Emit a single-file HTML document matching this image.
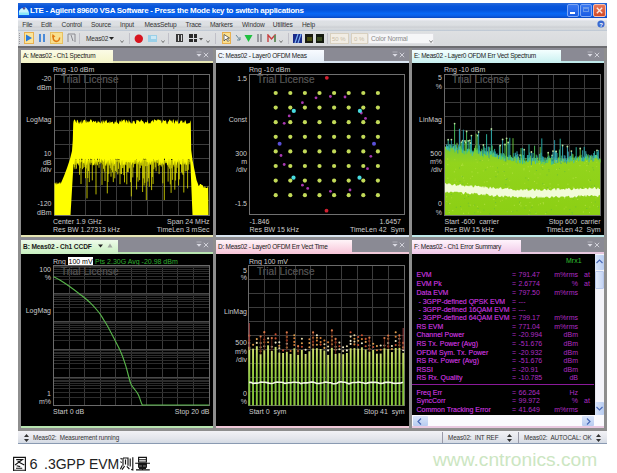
<!DOCTYPE html><html><head><meta charset="utf-8"><style>
html,body{margin:0;padding:0;background:#fff;}
body{width:617px;height:473px;position:relative;overflow:hidden;font-family:"Liberation Sans",sans-serif;}
div{box-sizing:border-box;}
</style></head><body>
<div style="position:absolute;left:18px;top:3px;width:589px;height:441px;background:#8e8e8e;"></div>
<div style="position:absolute;left:18px;top:3px;width:589px;height:15px;background:linear-gradient(#2a6ad8 0%,#0856dc 20%,#0452da 45%,#0866f4 70%,#0a5ee8 85%,#0846c0 100%);"></div>
<svg style="position:absolute;left:19px;top:6px" width="10" height="9" viewBox="0 0 10 9"><path d="M0 9 L0 5 C1 3 2.5 1.5 4.5 2 C5.5 1 7.5 1.5 8.5 3.5 C9.5 4.5 10 6 10 9Z" fill="#c8f4fc"/><path d="M3.5 2.2 L5 0.8 L6.5 2.2 L5 4Z" fill="#5a4a8a"/><rect x="0" y="6.5" width="10" height="2.5" fill="#8ae8f8"/></svg>
<div style="position:absolute;left:30px;top:7px;font-size:8px;line-height:8px;color:#fff;white-space:nowrap;font-weight:bold;letter-spacing:-0.28px;">LTE - Agilent 89600 VSA Software - Press the Mode key to switch applications</div>
<div style="position:absolute;left:567px;top:4px;width:12px;height:12.5px;background:linear-gradient(#3a78f0,#1a5ce4);border:1px solid #7ea6f4;border-radius:2px;"></div>
<div style="position:absolute;left:570px;top:12px;width:5px;height:2px;background:#fff;"></div>
<div style="position:absolute;left:580px;top:4px;width:12px;height:12.5px;background:linear-gradient(#3a78f0,#1a5ce4);border:1px solid #7ea6f4;border-radius:2px;"></div>
<div style="position:absolute;left:583px;top:7px;width:6px;height:5px;border:1px solid #6a98e8;border-top-width:2px;"></div>
<div style="position:absolute;left:593px;top:4px;width:13px;height:12.5px;background:linear-gradient(#e8785a,#d04a28);border:1px solid #f4c0b0;border-radius:2px;"></div>
<svg style="position:absolute;left:593px;top:4px" width="13" height="13"><path d="M3.8 3.8 L9.2 9.2 M9.2 3.8 L3.8 9.2" stroke="#fbe8e0" stroke-width="1.4"/></svg>
<div style="position:absolute;left:18px;top:18px;width:589px;height:12.5px;background:linear-gradient(#eeeef6 0%,#eeeef6 12%,#dde0e4 25%,#dcdfe2 55%,#cdd0d4 70%,#d8dbde 85%,#b8c4d2 100%);"></div>
<div style="position:absolute;left:22.3px;top:21.8px;font-size:6.6px;line-height:6.6px;color:#333;white-space:nowrap;letter-spacing:-0.15px;">File</div>
<div style="position:absolute;left:41px;top:21.8px;font-size:6.6px;line-height:6.6px;color:#333;white-space:nowrap;letter-spacing:-0.15px;">Edit</div>
<div style="position:absolute;left:61.6px;top:21.8px;font-size:6.6px;line-height:6.6px;color:#333;white-space:nowrap;letter-spacing:-0.15px;">Control</div>
<div style="position:absolute;left:91px;top:21.8px;font-size:6.6px;line-height:6.6px;color:#333;white-space:nowrap;letter-spacing:-0.15px;">Source</div>
<div style="position:absolute;left:120px;top:21.8px;font-size:6.6px;line-height:6.6px;color:#333;white-space:nowrap;letter-spacing:-0.15px;">Input</div>
<div style="position:absolute;left:144.5px;top:21.8px;font-size:6.6px;line-height:6.6px;color:#333;white-space:nowrap;letter-spacing:-0.15px;">MeasSetup</div>
<div style="position:absolute;left:185.5px;top:21.8px;font-size:6.6px;line-height:6.6px;color:#333;white-space:nowrap;letter-spacing:-0.15px;">Trace</div>
<div style="position:absolute;left:210px;top:21.8px;font-size:6.6px;line-height:6.6px;color:#333;white-space:nowrap;letter-spacing:-0.15px;">Markers</div>
<div style="position:absolute;left:242px;top:21.8px;font-size:6.6px;line-height:6.6px;color:#333;white-space:nowrap;letter-spacing:-0.15px;">Window</div>
<div style="position:absolute;left:272.8px;top:21.8px;font-size:6.6px;line-height:6.6px;color:#333;white-space:nowrap;letter-spacing:-0.15px;">Utilities</div>
<div style="position:absolute;left:302px;top:21.8px;font-size:6.6px;line-height:6.6px;color:#333;white-space:nowrap;letter-spacing:-0.15px;">Help</div>
<svg style="position:absolute;left:597px;top:20px" width="8" height="8"><circle cx="4" cy="4" r="3.6" fill="#3a6ad0"/><text x="4" y="6.5" font-size="6" font-weight="bold" text-anchor="middle" fill="#fff" font-family="Liberation Sans">?</text></svg>
<div style="position:absolute;left:18px;top:30.5px;width:589px;height:15.5px;background:linear-gradient(#dee0e2,#d8dadd);"></div>
<div style="position:absolute;left:18px;top:45.8px;width:589px;height:2.5px;background:#6c6c70;"></div>
<div style="position:absolute;left:19px;top:33px;width:1px;height:1px;background:#9a9aa0;"></div>
<div style="position:absolute;left:19px;top:35px;width:1px;height:1px;background:#9a9aa0;"></div>
<div style="position:absolute;left:19px;top:37px;width:1px;height:1px;background:#9a9aa0;"></div>
<div style="position:absolute;left:19px;top:39px;width:1px;height:1px;background:#9a9aa0;"></div>
<div style="position:absolute;left:19px;top:41px;width:1px;height:1px;background:#9a9aa0;"></div>
<div style="position:absolute;left:19px;top:43px;width:1px;height:1px;background:#9a9aa0;"></div>
<div style="position:absolute;left:23.5px;top:32px;width:10px;height:12px;background:#fbe49a;border:1px solid #e8b050;"></div>
<svg style="position:absolute;left:25px;top:34px" width="8" height="8"><path d="M1 0.5 L7 4 L1 7.5Z" fill="#2a7ad8"/></svg>
<div style="position:absolute;left:39px;top:34px;width:2px;height:8px;background:#4a8ad8;"></div>
<div style="position:absolute;left:43px;top:34px;width:2px;height:8px;background:#4a8ad8;"></div>
<div style="position:absolute;left:50px;top:32px;width:12.5px;height:12px;background:#f8e090;border:1px solid #e8c060;"></div>
<svg style="position:absolute;left:51px;top:33px" width="11" height="10"><path d="M3 3 A3.2 3.2 0 1 0 8.5 4.5" stroke="#e07a10" stroke-width="1.5" fill="none"/><path d="M1.5 1 L4.5 3.5 L1 4.5Z" fill="#e07a10"/></svg>
<svg style="position:absolute;left:67px;top:33px" width="9" height="10"><path d="M1 1 L8 1 M1 1 L1 9 M8 1 L8 9 M4 2 L6 8" stroke="#8a8a90" stroke-width="1" fill="none"/></svg>
<div style="position:absolute;left:79px;top:33px;width:1px;height:11px;background:#c0c0c8;"></div>
<div style="position:absolute;left:86px;top:36px;font-size:6.6px;line-height:6.6px;color:#333;white-space:nowrap;letter-spacing:-0.2px;">Meas02</div>
<svg style="position:absolute;left:109px;top:37px" width="5" height="4"><path d="M0 0 L5 0 L2.5 3Z" fill="#222"/></svg>
<svg style="position:absolute;left:119.7px;top:39px" width="4" height="5"><path d="M0.5 1.5 L2 3.5 L3.5 1.5" stroke="#555" stroke-width="0.8" fill="none"/></svg>
<div style="position:absolute;left:129px;top:33px;width:1px;height:11px;background:#c0c0c8;"></div>
<svg style="position:absolute;left:134px;top:34px" width="10" height="10"><circle cx="4.8" cy="4.8" r="4.2" fill="#d8141e"/></svg>
<div style="position:absolute;left:148px;top:35px;width:9px;height:7px;background:#9ad0e8;"></div>
<div style="position:absolute;left:151px;top:36px;width:5px;height:3px;background:#cce8f4;"></div>
<svg style="position:absolute;left:160.5px;top:39px" width="4" height="5"><path d="M0.5 1.5 L2 3.5 L3.5 1.5" stroke="#555" stroke-width="0.8" fill="none"/></svg>
<div style="position:absolute;left:168px;top:33px;width:1px;height:11px;background:#c0c0c8;"></div>
<div style="position:absolute;left:176px;top:34px;width:7px;height:8px;background:#3a3a3a;"></div>
<div style="position:absolute;left:178px;top:35px;width:1px;height:6px;background:#ddd;"></div>
<div style="position:absolute;left:180.5px;top:35px;width:1px;height:6px;background:#ddd;"></div>
<div style="position:absolute;left:189px;top:34px;width:3.5px;height:3.5px;background:#2a2a2a;"></div>
<div style="position:absolute;left:193.5px;top:34px;width:3.5px;height:3.5px;background:#2a2a2a;"></div>
<div style="position:absolute;left:189px;top:38.5px;width:3.5px;height:3.5px;background:#2a2a2a;"></div>
<div style="position:absolute;left:193.5px;top:38.5px;width:3.5px;height:3.5px;background:#2a2a2a;"></div>
<svg style="position:absolute;left:199px;top:38px" width="4" height="3"><path d="M0 0 L4 0 L2 2.5Z" fill="#555"/></svg>
<svg style="position:absolute;left:206px;top:39px" width="4" height="5"><path d="M0.5 1.5 L2 3.5 L3.5 1.5" stroke="#555" stroke-width="0.8" fill="none"/></svg>
<div style="position:absolute;left:215px;top:33px;width:1px;height:11px;background:#c0c0c8;"></div>
<div style="position:absolute;left:221.5px;top:32px;width:9px;height:12px;background:#fbe090;border:1px solid #e8b050;"></div>
<svg style="position:absolute;left:223px;top:34px" width="7" height="8"><path d="M1 0.5 L1 7 L3 5 L5 7.5 L6 6.5 L4 4.5 L6.5 4 Z" fill="#fff" stroke="#333" stroke-width="0.7"/></svg>
<svg style="position:absolute;left:235px;top:34px" width="7" height="9"><path d="M1 1 L5 6 M5 3 L5 6 L2 6" stroke="#6a8a9a" stroke-width="1" fill="none"/></svg>
<svg style="position:absolute;left:244px;top:34px" width="9" height="9"><path d="M0.5 1 L8.5 1 L4.5 8Z" fill="#20c040"/></svg>
<div style="position:absolute;left:257px;top:34px;width:1.5px;height:8px;background:#9a9aa0;"></div>
<div style="position:absolute;left:260px;top:34px;width:1.5px;height:8px;background:#9a9aa0;"></div>
<svg style="position:absolute;left:267px;top:34px" width="10" height="9"><path d="M1 8 L1 1 L4.5 5 L8 1 L8 8" stroke="#c84040" stroke-width="1.4" fill="none"/><path d="M8 1 L8 8" stroke="#40a060" stroke-width="1.4"/></svg>
<svg style="position:absolute;left:279px;top:39px" width="4" height="5"><path d="M0.5 1.5 L2 3.5 L3.5 1.5" stroke="#555" stroke-width="0.8" fill="none"/></svg>
<div style="position:absolute;left:288px;top:33px;width:1px;height:11px;background:#c0c0c8;"></div>
<svg style="position:absolute;left:293px;top:34px" width="9" height="9"><rect width="9" height="9" fill="#1a2a8a"/><path d="M2 9 L5 0 M5 9 L8 0" stroke="#7ab0f0" stroke-width="1.2"/></svg>
<div style="position:absolute;left:305px;top:34px;width:8px;height:9px;background:#1a1a10;"></div>
<div style="position:absolute;left:306.5px;top:37px;width:5px;height:4px;background:#4a5010;"></div>
<div style="position:absolute;left:315.5px;top:34px;width:8px;height:9px;background:#141a10;"></div>
<div style="position:absolute;left:317px;top:37px;width:5px;height:4px;background:#3a4a20;"></div>
<div style="position:absolute;left:327px;top:33px;width:1px;height:11px;background:#c0c0c8;"></div>
<div style="position:absolute;left:330px;top:32.5px;width:18.5px;height:11.5px;background:#f2ede4;border:1px solid #d8d0c0;"></div>
<div style="position:absolute;left:332px;top:36px;font-size:6px;line-height:6px;color:#c8bca8;white-space:nowrap;">50 %</div>
<div style="position:absolute;left:351px;top:32.5px;width:17px;height:11.5px;background:#f2ede4;border:1px solid #d8d0c0;"></div>
<div style="position:absolute;left:354px;top:36px;font-size:6px;line-height:6px;color:#c8bca8;white-space:nowrap;">0 %</div>
<div style="position:absolute;left:368px;top:33px;width:66px;height:11px;background:#f6f6f8;border:1px solid #e0e0e4;"></div>
<div style="position:absolute;left:371px;top:36px;font-size:6.6px;line-height:6.6px;color:#8a8a8a;white-space:nowrap;letter-spacing:-0.2px;">Color Normal</div>
<svg style="position:absolute;left:429px;top:39px" width="4" height="5"><path d="M0.5 1.5 L2 3.5 L3.5 1.5" stroke="#555" stroke-width="0.8" fill="none"/></svg>
<div style="position:absolute;left:21px;top:48px;width:192px;height:13px;background:#8a8a94;"></div>
<div style="position:absolute;left:21px;top:61px;width:192px;height:2px;background:#e6e6b4;"></div>
<div style="position:absolute;left:21px;top:49.5px;width:92px;height:13.5px;background:linear-gradient(#fbfbe6,#f4f4c8);"></div>
<div style="position:absolute;left:21px;top:63px;width:192px;height:172px;background:#000;"></div>
<div style="position:absolute;left:21px;top:235px;width:192px;height:2px;background:#e6e6b4;"></div>
<div style="position:absolute;left:23px;top:52.87px;font-size:6.5px;line-height:6.5px;color:#1a1a1a;white-space:nowrap;letter-spacing:-0.25px;">A: Meas02 - Ch1 Spectrum</div>
<svg style="position:absolute;left:196px;top:51px" width="6" height="7"><path d="M0.5 1 L5.5 1" stroke="#b8b8c0" stroke-width="0.8"/><path d="M0.5 3 L5.5 3 L3 5.8Z" fill="#dcdce4"/></svg>
<svg style="position:absolute;left:203px;top:51.5px" width="6" height="6"><path d="M0.8 0.8 L5.2 5.2 M5.2 0.8 L0.8 5.2" stroke="#d0d0d8" stroke-width="1"/></svg>
<div style="position:absolute;left:216px;top:48px;width:193px;height:13px;background:#8a8a94;"></div>
<div style="position:absolute;left:216px;top:61px;width:193px;height:2px;background:#d8e4f0;"></div>
<div style="position:absolute;left:216px;top:49.5px;width:108px;height:13.5px;background:linear-gradient(#f8fbff,#e2ecf6);"></div>
<div style="position:absolute;left:216px;top:63px;width:193px;height:172px;background:#000;"></div>
<div style="position:absolute;left:216px;top:235px;width:193px;height:2px;background:#d8e4f0;"></div>
<div style="position:absolute;left:218px;top:52.87px;font-size:6.5px;line-height:6.5px;color:#1a1a1a;white-space:nowrap;letter-spacing:-0.25px;">C: Meas02 - Layer0 OFDM Meas</div>
<svg style="position:absolute;left:392px;top:51px" width="6" height="7"><path d="M0.5 1 L5.5 1" stroke="#b8b8c0" stroke-width="0.8"/><path d="M0.5 3 L5.5 3 L3 5.8Z" fill="#dcdce4"/></svg>
<svg style="position:absolute;left:399px;top:51.5px" width="6" height="6"><path d="M0.8 0.8 L5.2 5.2 M5.2 0.8 L0.8 5.2" stroke="#d0d0d8" stroke-width="1"/></svg>
<div style="position:absolute;left:412px;top:48px;width:192px;height:13px;background:#8a8a94;"></div>
<div style="position:absolute;left:412px;top:61px;width:192px;height:2px;background:#bfe8ea;"></div>
<div style="position:absolute;left:412px;top:49.5px;width:149px;height:13.5px;background:linear-gradient(#f4ffff,#c8f0f0);"></div>
<div style="position:absolute;left:412px;top:63px;width:192px;height:172px;background:#000;"></div>
<div style="position:absolute;left:412px;top:235px;width:192px;height:2px;background:#bfe8ea;"></div>
<div style="position:absolute;left:414px;top:52.87px;font-size:6.5px;line-height:6.5px;color:#1a1a1a;white-space:nowrap;letter-spacing:-0.25px;">E: Meas02 - Layer0 OFDM Err Vect Spectrum</div>
<svg style="position:absolute;left:587px;top:51px" width="6" height="7"><path d="M0.5 1 L5.5 1" stroke="#b8b8c0" stroke-width="0.8"/><path d="M0.5 3 L5.5 3 L3 5.8Z" fill="#dcdce4"/></svg>
<svg style="position:absolute;left:594px;top:51.5px" width="6" height="6"><path d="M0.8 0.8 L5.2 5.2 M5.2 0.8 L0.8 5.2" stroke="#d0d0d8" stroke-width="1"/></svg>
<div style="position:absolute;left:21px;top:238px;width:192px;height:13.5px;background:#8a8a94;"></div>
<div style="position:absolute;left:21px;top:251.5px;width:192px;height:2.5px;background:#b8e4b0;"></div>
<div style="position:absolute;left:21px;top:240.2px;width:97px;height:13.800000000000011px;background:linear-gradient(#eefbea,#c8f0c0);"></div>
<div style="position:absolute;left:21px;top:254px;width:192px;height:172px;background:#000;"></div>
<div style="position:absolute;left:21px;top:426px;width:192px;height:2px;background:#b8e4b0;"></div>
<div style="position:absolute;left:23px;top:244.02px;font-size:6.6px;line-height:6.6px;color:#1a1a1a;white-space:nowrap;font-weight:bold;letter-spacing:-0.12px;">B: Meas02 - Ch1 CCDF</div>
<svg style="position:absolute;left:98px;top:244px" width="5" height="4"><path d="M0 0.5 L5 0.5 L2.5 3.5Z" fill="#222"/></svg>
<svg style="position:absolute;left:107px;top:243px" width="6" height="5"><path d="M0.5 4.5 L3 0.5 L5.5 4.5Z" fill="#a0a8a0"/></svg>
<svg style="position:absolute;left:196px;top:241px" width="6" height="7"><path d="M0.5 1 L5.5 1" stroke="#b8b8c0" stroke-width="0.8"/><path d="M0.5 3 L5.5 3 L3 5.8Z" fill="#dcdce4"/></svg>
<svg style="position:absolute;left:203px;top:241.5px" width="6" height="6"><path d="M0.8 0.8 L5.2 5.2 M5.2 0.8 L0.8 5.2" stroke="#d0d0d8" stroke-width="1"/></svg>
<div style="position:absolute;left:216px;top:238px;width:193px;height:13.5px;background:#8a8a94;"></div>
<div style="position:absolute;left:216px;top:251.5px;width:193px;height:2.5px;background:#f0c8d8;"></div>
<div style="position:absolute;left:216px;top:240.2px;width:136px;height:13.800000000000011px;background:linear-gradient(#fff4f8,#f8c4d8);"></div>
<div style="position:absolute;left:216px;top:254px;width:193px;height:172px;background:#000;"></div>
<div style="position:absolute;left:216px;top:426px;width:193px;height:2px;background:#f0c8d8;"></div>
<div style="position:absolute;left:218px;top:243.57px;font-size:6.5px;line-height:6.5px;color:#1a1a1a;white-space:nowrap;letter-spacing:-0.25px;">D: Meas02 - Layer0 OFDM Err Vect Time</div>
<svg style="position:absolute;left:392px;top:241px" width="6" height="7"><path d="M0.5 1 L5.5 1" stroke="#b8b8c0" stroke-width="0.8"/><path d="M0.5 3 L5.5 3 L3 5.8Z" fill="#dcdce4"/></svg>
<svg style="position:absolute;left:399px;top:241.5px" width="6" height="6"><path d="M0.8 0.8 L5.2 5.2 M5.2 0.8 L0.8 5.2" stroke="#d0d0d8" stroke-width="1"/></svg>
<div style="position:absolute;left:412px;top:238px;width:192px;height:13.5px;background:#8a8a94;"></div>
<div style="position:absolute;left:412px;top:251.5px;width:192px;height:2.5px;background:#e8c8e0;"></div>
<div style="position:absolute;left:412px;top:240.2px;width:109px;height:13.800000000000011px;background:linear-gradient(#fff4fc,#f0c8e8);"></div>
<div style="position:absolute;left:412px;top:254px;width:192px;height:172px;background:#000;"></div>
<div style="position:absolute;left:412px;top:426px;width:192px;height:2px;background:#e8c8e0;"></div>
<div style="position:absolute;left:414px;top:243.57px;font-size:6.5px;line-height:6.5px;color:#1a1a1a;white-space:nowrap;letter-spacing:-0.25px;">F: Meas02 - Ch1 Error Summary</div>
<svg style="position:absolute;left:587px;top:241px" width="6" height="7"><path d="M0.5 1 L5.5 1" stroke="#b8b8c0" stroke-width="0.8"/><path d="M0.5 3 L5.5 3 L3 5.8Z" fill="#dcdce4"/></svg>
<svg style="position:absolute;left:594px;top:241.5px" width="6" height="6"><path d="M0.8 0.8 L5.2 5.2 M5.2 0.8 L0.8 5.2" stroke="#d0d0d8" stroke-width="1"/></svg>
<div style="position:absolute;left:18px;top:431px;width:589px;height:13px;background:linear-gradient(#f2f2f6,#e4e6ec 60%,#d4dae4);border-bottom:1px solid #8a9ab2;"></div>
<svg style="position:absolute;left:24px;top:434px" width="5" height="8"><path d="M0 3 L2.5 0 L5 3Z M0 5 L2.5 8 L5 5Z" fill="#333"/></svg>
<div style="position:absolute;left:33px;top:434.96px;font-size:6.3px;line-height:6.3px;color:#333;white-space:nowrap;letter-spacing:-0.1px;">Meas02:&nbsp; Measurement running</div>
<div style="position:absolute;left:442px;top:432px;width:1px;height:11px;background:#9a9aa8;"></div>
<div style="position:absolute;left:448px;top:434.96px;font-size:6.3px;line-height:6.3px;color:#333;white-space:nowrap;letter-spacing:-0.1px;">Meas02:&nbsp; INT REF</div>
<svg style="position:absolute;left:506.5px;top:434px" width="5" height="8"><path d="M0 3 L2.5 0 L5 3Z M0 5 L2.5 8 L5 5Z" fill="#333"/></svg>
<div style="position:absolute;left:518px;top:432px;width:1px;height:11px;background:#9a9aa8;"></div>
<div style="position:absolute;left:524px;top:434.96px;font-size:6.3px;line-height:6.3px;color:#333;white-space:nowrap;letter-spacing:-0.1px;">Meas02:&nbsp; AUTOCAL: OK</div>
<svg style="position:absolute;left:595.5px;top:434px" width="5" height="8"><path d="M0 3 L2.5 0 L5 3Z M0 5 L2.5 8 L5 5Z" fill="#333"/></svg>
<div style="position:absolute;left:433px;top:449.75px;font-size:19.2px;line-height:19.2px;color:#cce6c2;white-space:nowrap;">www.cntronics.com</div>
<div style="position:absolute;left:53px;top:66.13px;font-size:7px;line-height:7px;color:#cccccc;white-space:nowrap;">Rng -10 dBm</div>
<svg style="position:absolute;left:52px;top:72px" width="160" height="146"><line x1="17.5" y1="2.5" x2="17.5" y2="143.5" stroke="#3c3c3c" stroke-width="1"/><line x1="33.5" y1="2.5" x2="33.5" y2="143.5" stroke="#3c3c3c" stroke-width="1"/><line x1="48.5" y1="2.5" x2="48.5" y2="143.5" stroke="#3c3c3c" stroke-width="1"/><line x1="64.5" y1="2.5" x2="64.5" y2="143.5" stroke="#3c3c3c" stroke-width="1"/><line x1="79.5" y1="2.5" x2="79.5" y2="143.5" stroke="#3c3c3c" stroke-width="1"/><line x1="95.5" y1="2.5" x2="95.5" y2="143.5" stroke="#3c3c3c" stroke-width="1"/><line x1="110.5" y1="2.5" x2="110.5" y2="143.5" stroke="#3c3c3c" stroke-width="1"/><line x1="126.5" y1="2.5" x2="126.5" y2="143.5" stroke="#3c3c3c" stroke-width="1"/><line x1="141.5" y1="2.5" x2="141.5" y2="143.5" stroke="#3c3c3c" stroke-width="1"/><line x1="2.5" y1="16.5" x2="157.5" y2="16.5" stroke="#3c3c3c" stroke-width="1"/><line x1="2.5" y1="30.5" x2="157.5" y2="30.5" stroke="#3c3c3c" stroke-width="1"/><line x1="2.5" y1="44.5" x2="157.5" y2="44.5" stroke="#3c3c3c" stroke-width="1"/><line x1="2.5" y1="58.5" x2="157.5" y2="58.5" stroke="#3c3c3c" stroke-width="1"/><line x1="2.5" y1="72.5" x2="157.5" y2="72.5" stroke="#3c3c3c" stroke-width="1"/><line x1="2.5" y1="86.5" x2="157.5" y2="86.5" stroke="#3c3c3c" stroke-width="1"/><line x1="2.5" y1="100.5" x2="157.5" y2="100.5" stroke="#3c3c3c" stroke-width="1"/><line x1="2.5" y1="114.5" x2="157.5" y2="114.5" stroke="#3c3c3c" stroke-width="1"/><line x1="2.5" y1="128.5" x2="157.5" y2="128.5" stroke="#3c3c3c" stroke-width="1"/><rect x="2.5" y="2.5" width="155.0" height="141.0" fill="none" stroke="#6a6a6a" stroke-width="1"/></svg>
<div style="position:absolute;left:61px;top:75.18px;font-size:10px;line-height:10px;color:#4c4c4c;white-space:nowrap;letter-spacing:0.1px;text-shadow:0 0 0.6px #4c4c4c;">Trial License</div>
<div style="position:absolute;right:565.5px;top:74.63px;font-size:7px;line-height:7px;color:#cccccc;white-space:nowrap;">-20</div>
<div style="position:absolute;right:565.5px;top:83.63px;font-size:7px;line-height:7px;color:#cccccc;white-space:nowrap;">dBm</div>
<div style="position:absolute;right:565.5px;top:116.13px;font-size:7px;line-height:7px;color:#cccccc;white-space:nowrap;">LogMag</div>
<div style="position:absolute;right:565.5px;top:149.63px;font-size:7px;line-height:7px;color:#cccccc;white-space:nowrap;">10</div>
<div style="position:absolute;right:565.5px;top:158.63px;font-size:7px;line-height:7px;color:#cccccc;white-space:nowrap;">dB</div>
<div style="position:absolute;right:565.5px;top:166.13px;font-size:7px;line-height:7px;color:#cccccc;white-space:nowrap;">/div</div>
<div style="position:absolute;right:565.5px;top:199.63px;font-size:7px;line-height:7px;color:#cccccc;white-space:nowrap;">-120</div>
<div style="position:absolute;right:565.5px;top:208.63px;font-size:7px;line-height:7px;color:#cccccc;white-space:nowrap;">dBm</div>
<div style="position:absolute;left:53px;top:217.63px;font-size:7px;line-height:7px;color:#cccccc;white-space:nowrap;">Center 1.9 GHz</div>
<div style="position:absolute;left:53px;top:225.63px;font-size:7px;line-height:7px;color:#cccccc;white-space:nowrap;">Res BW 1.27313 kHz</div>
<div style="position:absolute;right:407.5px;top:217.63px;font-size:7px;line-height:7px;color:#cccccc;white-space:nowrap;">Span 24 MHz</div>
<div style="position:absolute;right:407.5px;top:225.63px;font-size:7px;line-height:7px;color:#cccccc;white-space:nowrap;">TimeLen 3 mSec</div>
<svg style="position:absolute;left:0;top:0" width="617" height="473"><polygon fill="#ffff00" points="54.5,215.0 54.5,183.2 55.3,182.5 56.1,184.7 56.9,182.1 57.7,184.2 58.5,183.4 59.3,182.1 60.1,184.0 60.9,182.0 61.0,183.0 64.0,176.0 67.0,168.0 70.0,159.0 72.0,151.0 72.8,140.0 73.2,124.0 73.5,121.4 74.2,119.5 74.9,119.7 75.6,121.3 76.3,123.3 77.0,119.8 77.7,120.3 78.4,122.3 79.1,123.9 79.8,122.1 80.5,121.2 81.2,124.1 81.9,119.4 82.6,123.5 83.3,120.6 84.0,119.9 84.7,119.8 85.4,120.7 86.1,123.3 86.8,120.1 87.5,122.1 88.2,122.4 88.9,121.1 89.6,121.9 90.3,119.5 91.0,119.5 91.7,120.2 92.4,122.6 93.1,121.3 93.8,120.8 94.5,122.1 95.2,121.5 95.9,120.7 96.6,123.2 97.3,122.7 98.0,120.4 98.7,122.1 99.4,121.8 100.1,123.6 100.8,122.8 101.5,120.6 102.2,124.1 102.9,119.8 103.6,121.3 104.3,123.0 105.0,120.0 105.7,121.6 106.4,119.4 107.1,122.5 107.8,123.0 108.5,122.1 109.2,123.6 109.9,120.8 110.6,122.7 111.3,122.2 112.0,122.1 112.7,121.5 113.4,123.4 114.1,123.9 114.8,121.6 115.5,122.5 116.2,119.5 116.9,122.7 117.6,122.4 118.3,124.2 119.0,123.3 119.7,120.6 120.4,121.1 121.1,122.5 121.8,119.3 122.5,121.5 123.2,120.0 123.9,119.8 124.6,119.5 125.3,123.0 126.0,119.8 126.7,120.4 127.4,121.2 128.1,123.6 128.8,119.6 129.5,121.4 130.2,121.9 130.9,123.6 131.6,123.3 132.3,123.5 133.0,120.6 133.7,121.3 134.4,121.0 135.1,123.6 135.8,124.0 136.5,120.0 137.2,120.1 137.9,120.4 138.6,120.4 139.3,121.6 140.0,122.1 140.7,120.5 141.4,119.2 142.1,121.3 142.8,121.0 143.5,122.0 144.2,124.0 144.9,122.7 145.6,121.8 146.3,122.3 147.0,122.6 147.7,119.5 148.4,123.7 149.1,123.1 149.8,123.6 150.5,123.2 151.2,121.2 151.9,121.2 152.6,119.7 153.3,122.4 154.0,119.5 154.7,119.5 155.4,120.2 156.1,120.0 156.8,120.9 157.5,119.5 158.2,119.2 158.9,120.0 159.6,119.7 160.3,121.0 161.0,119.3 161.7,123.6 162.4,122.3 163.1,119.9 163.8,120.5 164.5,120.9 165.2,121.0 165.9,119.8 166.6,123.4 167.3,124.2 168.0,121.5 168.7,121.6 169.4,119.6 170.1,119.7 170.8,120.9 171.5,120.5 172.2,123.3 172.9,120.0 173.6,119.3 174.3,124.0 175.0,121.8 175.7,119.9 176.4,121.9 177.1,119.3 177.8,121.8 178.5,124.1 179.2,123.5 179.9,122.7 180.6,120.5 181.3,121.0 182.0,120.0 182.7,123.1 183.4,121.9 184.1,123.1 184.8,120.8 185.5,120.3 186.2,123.3 186.9,124.1 187.6,123.5 188.3,123.2 189.0,123.3 189.7,122.9 190.4,120.3 190.8,123.0 191.2,150.0 192.5,160.0 194.5,170.0 196.5,180.0 198.0,184.0 198.5,186.1 199.3,185.4 200.1,183.9 200.9,183.9 201.7,185.0 202.5,184.9 203.3,186.8 204.1,188.0 204.9,185.8 205.7,187.9 206.5,188.1 207.3,188.0 208.1,185.4 208.5,215.0 192.5,215.0 190.5,166.0 190.0,159.8 189.3,159.8 188.6,159.6 187.9,159.6 187.2,163.0 186.5,165.2 185.8,164.7 185.1,161.8 184.4,163.2 183.7,164.4 183.0,158.7 182.3,163.3 181.6,165.3 180.9,164.3 180.2,164.0 179.5,161.8 178.8,159.4 178.1,164.3 177.4,160.7 176.7,164.4 176.0,165.8 175.3,161.2 174.6,161.2 173.9,165.6 173.2,163.8 172.5,159.4 171.8,159.0 171.1,159.2 170.4,165.2 169.7,164.5 169.0,159.2 168.3,164.6 167.6,165.8 166.9,163.3 166.2,160.8 165.5,162.4 164.8,159.0 164.1,158.1 163.4,165.8 162.7,163.2 162.0,162.2 161.3,165.5 160.6,161.5 159.9,165.0 159.2,164.6 158.5,159.7 157.8,160.0 157.1,160.3 156.4,159.9 155.7,162.7 155.0,160.1 154.3,161.4 153.6,159.0 152.9,165.3 152.2,160.8 151.5,161.7 150.8,162.7 150.1,165.2 149.4,161.4 148.7,165.3 148.0,162.0 147.3,162.3 146.6,162.2 145.9,158.1 145.2,161.5 144.5,159.5 143.8,158.0 143.1,164.4 142.4,159.4 141.7,161.8 141.0,163.8 140.3,162.5 139.6,160.6 138.9,162.1 138.2,162.4 137.5,164.3 136.8,158.8 136.1,162.5 135.4,160.0 134.7,160.2 134.0,164.2 133.3,162.1 132.6,162.5 131.9,164.1 131.2,165.3 130.5,161.5 129.8,162.9 129.1,162.0 128.4,162.1 127.7,163.5 127.0,161.6 126.3,162.3 125.6,161.8 124.9,165.5 124.2,163.6 123.5,165.0 122.8,165.5 122.1,160.1 121.4,162.5 120.7,165.5 120.0,164.7 119.3,159.1 118.6,159.0 117.9,161.5 117.2,158.6 116.5,159.9 115.8,158.6 115.1,163.4 114.4,164.3 113.7,165.2 113.0,159.2 112.3,163.7 111.6,163.3 110.9,159.1 110.2,165.1 109.5,165.7 108.8,159.8 108.1,165.6 107.4,161.2 106.7,161.9 106.0,165.9 105.3,164.7 104.6,159.3 103.9,161.5 103.2,162.1 102.5,160.7 101.8,159.6 101.1,160.5 100.4,163.8 99.7,158.2 99.0,162.4 98.3,161.5 97.6,158.1 96.9,160.7 96.2,163.0 95.5,162.1 94.8,158.5 94.1,165.9 93.4,164.3 92.7,165.8 92.0,158.8 91.3,160.1 90.6,158.3 89.9,164.2 89.2,160.2 88.5,159.0 87.8,161.4 87.1,165.3 86.4,164.6 85.7,160.1 85.0,159.2 84.3,165.4 83.6,162.6 82.9,163.6 82.2,158.7 81.5,158.5 80.8,163.5 80.1,161.4 79.4,158.6 78.7,165.5 78.0,163.1 77.3,164.4 76.6,158.7 75.9,164.8 75.2,158.5 74.5,164.9 73.5,164.0 70.5,215.0"/><line x1="74.3" y1="160" x2="74.3" y2="167.4" stroke="#f4f400" stroke-width="0.75"/><line x1="75.0" y1="160" x2="75.0" y2="169.2" stroke="#f4f400" stroke-width="0.75"/><line x1="75.8" y1="160" x2="75.8" y2="164.8" stroke="#f4f400" stroke-width="0.75"/><line x1="76.5" y1="160" x2="76.5" y2="168.7" stroke="#f4f400" stroke-width="0.75"/><line x1="77.3" y1="160" x2="77.3" y2="163.0" stroke="#f4f400" stroke-width="0.75"/><line x1="78.0" y1="160" x2="78.0" y2="162.5" stroke="#f4f400" stroke-width="0.75"/><line x1="78.8" y1="160" x2="78.8" y2="165.4" stroke="#f4f400" stroke-width="0.75"/><line x1="79.5" y1="160" x2="79.5" y2="174.8" stroke="#f4f400" stroke-width="0.75"/><line x1="80.3" y1="160" x2="80.3" y2="168.2" stroke="#f4f400" stroke-width="0.75"/><line x1="81.0" y1="160" x2="81.0" y2="184.0" stroke="#f4f400" stroke-width="0.75"/><line x1="81.8" y1="160" x2="81.8" y2="162.1" stroke="#f4f400" stroke-width="0.75"/><line x1="82.5" y1="160" x2="82.5" y2="169.2" stroke="#f4f400" stroke-width="0.75"/><line x1="83.3" y1="160" x2="83.3" y2="167.8" stroke="#f4f400" stroke-width="0.75"/><line x1="84.0" y1="160" x2="84.0" y2="163.0" stroke="#f4f400" stroke-width="0.75"/><line x1="84.8" y1="160" x2="84.8" y2="167.1" stroke="#f4f400" stroke-width="0.75"/><line x1="85.5" y1="160" x2="85.5" y2="178.2" stroke="#f4f400" stroke-width="0.75"/><line x1="86.3" y1="160" x2="86.3" y2="168.4" stroke="#f4f400" stroke-width="0.75"/><line x1="87.0" y1="160" x2="87.0" y2="198.4" stroke="#f4f400" stroke-width="0.75"/><line x1="87.8" y1="160" x2="87.8" y2="178.1" stroke="#f4f400" stroke-width="0.75"/><line x1="88.5" y1="160" x2="88.5" y2="171.1" stroke="#f4f400" stroke-width="0.75"/><line x1="89.3" y1="160" x2="89.3" y2="182.1" stroke="#f4f400" stroke-width="0.75"/><line x1="90.0" y1="160" x2="90.0" y2="162.7" stroke="#f4f400" stroke-width="0.75"/><line x1="90.8" y1="160" x2="90.8" y2="164.7" stroke="#f4f400" stroke-width="0.75"/><line x1="91.5" y1="160" x2="91.5" y2="162.8" stroke="#f4f400" stroke-width="0.75"/><line x1="92.3" y1="160" x2="92.3" y2="180.4" stroke="#f4f400" stroke-width="0.75"/><line x1="93.0" y1="160" x2="93.0" y2="165.0" stroke="#f4f400" stroke-width="0.75"/><line x1="93.8" y1="160" x2="93.8" y2="165.1" stroke="#f4f400" stroke-width="0.75"/><line x1="94.5" y1="160" x2="94.5" y2="163.5" stroke="#f4f400" stroke-width="0.75"/><line x1="95.3" y1="160" x2="95.3" y2="164.7" stroke="#f4f400" stroke-width="0.75"/><line x1="96.0" y1="160" x2="96.0" y2="194.4" stroke="#f4f400" stroke-width="0.75"/><line x1="96.8" y1="160" x2="96.8" y2="164.5" stroke="#f4f400" stroke-width="0.75"/><line x1="97.5" y1="160" x2="97.5" y2="165.3" stroke="#f4f400" stroke-width="0.75"/><line x1="98.3" y1="160" x2="98.3" y2="162.0" stroke="#f4f400" stroke-width="0.75"/><line x1="99.0" y1="160" x2="99.0" y2="167.8" stroke="#f4f400" stroke-width="0.75"/><line x1="99.8" y1="160" x2="99.8" y2="164.0" stroke="#f4f400" stroke-width="0.75"/><line x1="100.5" y1="160" x2="100.5" y2="162.0" stroke="#f4f400" stroke-width="0.75"/><line x1="101.3" y1="160" x2="101.3" y2="162.8" stroke="#f4f400" stroke-width="0.75"/><line x1="102.0" y1="160" x2="102.0" y2="184.9" stroke="#f4f400" stroke-width="0.75"/><line x1="102.8" y1="160" x2="102.8" y2="164.4" stroke="#f4f400" stroke-width="0.75"/><line x1="103.5" y1="160" x2="103.5" y2="168.8" stroke="#f4f400" stroke-width="0.75"/><line x1="104.3" y1="160" x2="104.3" y2="171.6" stroke="#f4f400" stroke-width="0.75"/><line x1="105.0" y1="160" x2="105.0" y2="181.0" stroke="#f4f400" stroke-width="0.75"/><line x1="105.8" y1="160" x2="105.8" y2="165.6" stroke="#f4f400" stroke-width="0.75"/><line x1="106.5" y1="160" x2="106.5" y2="163.5" stroke="#f4f400" stroke-width="0.75"/><line x1="107.3" y1="160" x2="107.3" y2="193.4" stroke="#f4f400" stroke-width="0.75"/><line x1="108.0" y1="160" x2="108.0" y2="182.0" stroke="#f4f400" stroke-width="0.75"/><line x1="108.8" y1="160" x2="108.8" y2="173.9" stroke="#f4f400" stroke-width="0.75"/><line x1="109.5" y1="160" x2="109.5" y2="163.4" stroke="#f4f400" stroke-width="0.75"/><line x1="110.3" y1="160" x2="110.3" y2="168.3" stroke="#f4f400" stroke-width="0.75"/><line x1="111.0" y1="160" x2="111.0" y2="176.7" stroke="#f4f400" stroke-width="0.75"/><line x1="111.8" y1="160" x2="111.8" y2="169.9" stroke="#f4f400" stroke-width="0.75"/><line x1="112.5" y1="160" x2="112.5" y2="172.3" stroke="#f4f400" stroke-width="0.75"/><line x1="113.3" y1="160" x2="113.3" y2="182.1" stroke="#f4f400" stroke-width="0.75"/><line x1="114.0" y1="160" x2="114.0" y2="166.0" stroke="#f4f400" stroke-width="0.75"/><line x1="114.8" y1="160" x2="114.8" y2="178.3" stroke="#f4f400" stroke-width="0.75"/><line x1="115.5" y1="160" x2="115.5" y2="170.9" stroke="#f4f400" stroke-width="0.75"/><line x1="116.3" y1="160" x2="116.3" y2="172.3" stroke="#f4f400" stroke-width="0.75"/><line x1="117.0" y1="160" x2="117.0" y2="162.0" stroke="#f4f400" stroke-width="0.75"/><line x1="117.8" y1="160" x2="117.8" y2="174.4" stroke="#f4f400" stroke-width="0.75"/><line x1="118.5" y1="160" x2="118.5" y2="168.9" stroke="#f4f400" stroke-width="0.75"/><line x1="119.3" y1="160" x2="119.3" y2="162.6" stroke="#f4f400" stroke-width="0.75"/><line x1="120.0" y1="160" x2="120.0" y2="184.2" stroke="#f4f400" stroke-width="0.75"/><line x1="120.8" y1="160" x2="120.8" y2="173.8" stroke="#f4f400" stroke-width="0.75"/><line x1="121.5" y1="160" x2="121.5" y2="174.1" stroke="#f4f400" stroke-width="0.75"/><line x1="122.3" y1="160" x2="122.3" y2="168.1" stroke="#f4f400" stroke-width="0.75"/><line x1="123.0" y1="160" x2="123.0" y2="167.9" stroke="#f4f400" stroke-width="0.75"/><line x1="123.8" y1="160" x2="123.8" y2="175.1" stroke="#f4f400" stroke-width="0.75"/><line x1="124.5" y1="160" x2="124.5" y2="182.4" stroke="#f4f400" stroke-width="0.75"/><line x1="125.3" y1="160" x2="125.3" y2="164.6" stroke="#f4f400" stroke-width="0.75"/><line x1="126.0" y1="160" x2="126.0" y2="165.3" stroke="#f4f400" stroke-width="0.75"/><line x1="126.8" y1="160" x2="126.8" y2="184.3" stroke="#f4f400" stroke-width="0.75"/><line x1="127.5" y1="160" x2="127.5" y2="172.0" stroke="#f4f400" stroke-width="0.75"/><line x1="128.3" y1="160" x2="128.3" y2="172.1" stroke="#f4f400" stroke-width="0.75"/><line x1="129.1" y1="160" x2="129.1" y2="168.5" stroke="#f4f400" stroke-width="0.75"/><line x1="129.8" y1="160" x2="129.8" y2="167.7" stroke="#f4f400" stroke-width="0.75"/><line x1="130.6" y1="160" x2="130.6" y2="182.2" stroke="#f4f400" stroke-width="0.75"/><line x1="131.3" y1="160" x2="131.3" y2="196.4" stroke="#f4f400" stroke-width="0.75"/><line x1="132.1" y1="160" x2="132.1" y2="162.2" stroke="#f4f400" stroke-width="0.75"/><line x1="132.8" y1="160" x2="132.8" y2="177.4" stroke="#f4f400" stroke-width="0.75"/><line x1="133.6" y1="160" x2="133.6" y2="167.4" stroke="#f4f400" stroke-width="0.75"/><line x1="134.3" y1="160" x2="134.3" y2="164.1" stroke="#f4f400" stroke-width="0.75"/><line x1="135.1" y1="160" x2="135.1" y2="164.1" stroke="#f4f400" stroke-width="0.75"/><line x1="135.8" y1="160" x2="135.8" y2="163.4" stroke="#f4f400" stroke-width="0.75"/><line x1="136.6" y1="160" x2="136.6" y2="189.5" stroke="#f4f400" stroke-width="0.75"/><line x1="137.3" y1="160" x2="137.3" y2="177.4" stroke="#f4f400" stroke-width="0.75"/><line x1="138.1" y1="160" x2="138.1" y2="181.6" stroke="#f4f400" stroke-width="0.75"/><line x1="138.8" y1="160" x2="138.8" y2="164.4" stroke="#f4f400" stroke-width="0.75"/><line x1="139.6" y1="160" x2="139.6" y2="180.1" stroke="#f4f400" stroke-width="0.75"/><line x1="140.3" y1="160" x2="140.3" y2="168.1" stroke="#f4f400" stroke-width="0.75"/><line x1="141.1" y1="160" x2="141.1" y2="165.2" stroke="#f4f400" stroke-width="0.75"/><line x1="141.8" y1="160" x2="141.8" y2="165.8" stroke="#f4f400" stroke-width="0.75"/><line x1="142.6" y1="160" x2="142.6" y2="192.0" stroke="#f4f400" stroke-width="0.75"/><line x1="143.3" y1="160" x2="143.3" y2="178.4" stroke="#f4f400" stroke-width="0.75"/><line x1="144.1" y1="160" x2="144.1" y2="185.5" stroke="#f4f400" stroke-width="0.75"/><line x1="144.8" y1="160" x2="144.8" y2="182.9" stroke="#f4f400" stroke-width="0.75"/><line x1="145.6" y1="160" x2="145.6" y2="166.2" stroke="#f4f400" stroke-width="0.75"/><line x1="146.3" y1="160" x2="146.3" y2="200.0" stroke="#f4f400" stroke-width="0.75"/><line x1="147.1" y1="160" x2="147.1" y2="166.0" stroke="#f4f400" stroke-width="0.75"/><line x1="147.8" y1="160" x2="147.8" y2="181.6" stroke="#f4f400" stroke-width="0.75"/><line x1="148.6" y1="160" x2="148.6" y2="178.2" stroke="#f4f400" stroke-width="0.75"/><line x1="149.3" y1="160" x2="149.3" y2="186.7" stroke="#f4f400" stroke-width="0.75"/><line x1="150.1" y1="160" x2="150.1" y2="164.8" stroke="#f4f400" stroke-width="0.75"/><line x1="150.8" y1="160" x2="150.8" y2="163.9" stroke="#f4f400" stroke-width="0.75"/><line x1="151.6" y1="160" x2="151.6" y2="190.1" stroke="#f4f400" stroke-width="0.75"/><line x1="152.3" y1="160" x2="152.3" y2="177.0" stroke="#f4f400" stroke-width="0.75"/><line x1="153.1" y1="160" x2="153.1" y2="184.0" stroke="#f4f400" stroke-width="0.75"/><line x1="153.8" y1="160" x2="153.8" y2="169.2" stroke="#f4f400" stroke-width="0.75"/><line x1="154.6" y1="160" x2="154.6" y2="162.5" stroke="#f4f400" stroke-width="0.75"/><line x1="155.3" y1="160" x2="155.3" y2="167.4" stroke="#f4f400" stroke-width="0.75"/><line x1="156.1" y1="160" x2="156.1" y2="171.3" stroke="#f4f400" stroke-width="0.75"/><line x1="156.8" y1="160" x2="156.8" y2="162.5" stroke="#f4f400" stroke-width="0.75"/><line x1="157.6" y1="160" x2="157.6" y2="163.2" stroke="#f4f400" stroke-width="0.75"/><line x1="158.3" y1="160" x2="158.3" y2="165.8" stroke="#f4f400" stroke-width="0.75"/><line x1="159.1" y1="160" x2="159.1" y2="174.1" stroke="#f4f400" stroke-width="0.75"/><line x1="159.8" y1="160" x2="159.8" y2="164.7" stroke="#f4f400" stroke-width="0.75"/><line x1="160.6" y1="160" x2="160.6" y2="165.2" stroke="#f4f400" stroke-width="0.75"/><line x1="161.3" y1="160" x2="161.3" y2="166.5" stroke="#f4f400" stroke-width="0.75"/><line x1="162.1" y1="160" x2="162.1" y2="163.6" stroke="#f4f400" stroke-width="0.75"/><line x1="162.8" y1="160" x2="162.8" y2="183.3" stroke="#f4f400" stroke-width="0.75"/><line x1="163.6" y1="160" x2="163.6" y2="164.2" stroke="#f4f400" stroke-width="0.75"/><line x1="164.3" y1="160" x2="164.3" y2="200.0" stroke="#f4f400" stroke-width="0.75"/><line x1="165.1" y1="160" x2="165.1" y2="163.4" stroke="#f4f400" stroke-width="0.75"/><line x1="165.8" y1="160" x2="165.8" y2="162.9" stroke="#f4f400" stroke-width="0.75"/><line x1="166.6" y1="160" x2="166.6" y2="162.9" stroke="#f4f400" stroke-width="0.75"/><line x1="167.3" y1="160" x2="167.3" y2="164.7" stroke="#f4f400" stroke-width="0.75"/><line x1="168.1" y1="160" x2="168.1" y2="181.6" stroke="#f4f400" stroke-width="0.75"/><line x1="168.8" y1="160" x2="168.8" y2="166.8" stroke="#f4f400" stroke-width="0.75"/><line x1="169.6" y1="160" x2="169.6" y2="168.7" stroke="#f4f400" stroke-width="0.75"/><line x1="170.3" y1="160" x2="170.3" y2="184.4" stroke="#f4f400" stroke-width="0.75"/><line x1="171.1" y1="160" x2="171.1" y2="192.9" stroke="#f4f400" stroke-width="0.75"/><line x1="171.8" y1="160" x2="171.8" y2="168.3" stroke="#f4f400" stroke-width="0.75"/><line x1="172.6" y1="160" x2="172.6" y2="179.9" stroke="#f4f400" stroke-width="0.75"/><line x1="173.3" y1="160" x2="173.3" y2="164.8" stroke="#f4f400" stroke-width="0.75"/><line x1="174.1" y1="160" x2="174.1" y2="166.6" stroke="#f4f400" stroke-width="0.75"/><line x1="174.8" y1="160" x2="174.8" y2="189.7" stroke="#f4f400" stroke-width="0.75"/><line x1="175.6" y1="160" x2="175.6" y2="180.5" stroke="#f4f400" stroke-width="0.75"/><line x1="176.3" y1="160" x2="176.3" y2="173.1" stroke="#f4f400" stroke-width="0.75"/><line x1="177.1" y1="160" x2="177.1" y2="167.8" stroke="#f4f400" stroke-width="0.75"/><line x1="177.8" y1="160" x2="177.8" y2="162.0" stroke="#f4f400" stroke-width="0.75"/><line x1="178.6" y1="160" x2="178.6" y2="185.5" stroke="#f4f400" stroke-width="0.75"/><line x1="179.3" y1="160" x2="179.3" y2="179.4" stroke="#f4f400" stroke-width="0.75"/><line x1="180.1" y1="160" x2="180.1" y2="164.6" stroke="#f4f400" stroke-width="0.75"/><line x1="180.8" y1="160" x2="180.8" y2="163.5" stroke="#f4f400" stroke-width="0.75"/><line x1="181.6" y1="160" x2="181.6" y2="172.3" stroke="#f4f400" stroke-width="0.75"/><line x1="182.3" y1="160" x2="182.3" y2="173.5" stroke="#f4f400" stroke-width="0.75"/><line x1="183.1" y1="160" x2="183.1" y2="175.0" stroke="#f4f400" stroke-width="0.75"/><line x1="183.8" y1="160" x2="183.8" y2="192.5" stroke="#f4f400" stroke-width="0.75"/><line x1="184.6" y1="160" x2="184.6" y2="164.4" stroke="#f4f400" stroke-width="0.75"/><line x1="185.3" y1="160" x2="185.3" y2="171.3" stroke="#f4f400" stroke-width="0.75"/><line x1="186.1" y1="160" x2="186.1" y2="163.2" stroke="#f4f400" stroke-width="0.75"/><line x1="186.8" y1="160" x2="186.8" y2="171.1" stroke="#f4f400" stroke-width="0.75"/><line x1="187.6" y1="160" x2="187.6" y2="188.4" stroke="#f4f400" stroke-width="0.75"/><line x1="188.3" y1="160" x2="188.3" y2="169.9" stroke="#f4f400" stroke-width="0.75"/><line x1="189.1" y1="160" x2="189.1" y2="164.3" stroke="#f4f400" stroke-width="0.75"/><line x1="189.8" y1="160" x2="189.8" y2="162.1" stroke="#f4f400" stroke-width="0.75"/></svg>
<div style="position:absolute;left:249px;top:66.13px;font-size:7px;line-height:7px;color:#cccccc;white-space:nowrap;">Rng -10 dBm</div>
<svg style="position:absolute;left:247px;top:72px" width="160" height="145"><rect x="2.5" y="2.5" width="155.0" height="140.0" fill="none" stroke="#707070" stroke-width="1"/></svg>
<div style="position:absolute;left:257px;top:75.18px;font-size:10px;line-height:10px;color:#4c4c4c;white-space:nowrap;letter-spacing:0.1px;text-shadow:0 0 0.6px #4c4c4c;">Trial License</div>
<div style="position:absolute;right:370px;top:74.63px;font-size:7px;line-height:7px;color:#cccccc;white-space:nowrap;">1.5</div>
<div style="position:absolute;right:370px;top:116.13px;font-size:7px;line-height:7px;color:#cccccc;white-space:nowrap;">Const</div>
<div style="position:absolute;right:370px;top:149.63px;font-size:7px;line-height:7px;color:#cccccc;white-space:nowrap;">300</div>
<div style="position:absolute;right:370px;top:157.63px;font-size:7px;line-height:7px;color:#cccccc;white-space:nowrap;">m</div>
<div style="position:absolute;right:370px;top:165.63px;font-size:7px;line-height:7px;color:#cccccc;white-space:nowrap;">/div</div>
<div style="position:absolute;right:370px;top:199.63px;font-size:7px;line-height:7px;color:#cccccc;white-space:nowrap;">-1.5</div>
<div style="position:absolute;left:249.5px;top:217.63px;font-size:7px;line-height:7px;color:#cccccc;white-space:nowrap;">-1.846</div>
<div style="position:absolute;left:249.5px;top:225.63px;font-size:7px;line-height:7px;color:#cccccc;white-space:nowrap;">Res BW 15 kHz</div>
<div style="position:absolute;right:216px;top:217.63px;font-size:7px;line-height:7px;color:#cccccc;white-space:nowrap;">1.6457</div>
<div style="position:absolute;right:212.5px;top:225.63px;font-size:7px;line-height:7px;color:#cccccc;white-space:nowrap;">TimeLen 42&nbsp; Sym</div>
<svg style="position:absolute;left:0;top:0" width="617" height="473"><circle cx="275.7" cy="93.0" r="2.1" fill="#c2da58"/><circle cx="290.3" cy="93.0" r="2.1" fill="#c2da58"/><circle cx="304.9" cy="93.0" r="2.1" fill="#c2da58"/><circle cx="319.5" cy="93.0" r="2.1" fill="#c2da58"/><circle cx="334.1" cy="93.0" r="2.1" fill="#c2da58"/><circle cx="348.7" cy="93.0" r="2.1" fill="#c2da58"/><circle cx="363.3" cy="93.0" r="2.1" fill="#c2da58"/><circle cx="377.9" cy="93.0" r="2.1" fill="#c2da58"/><circle cx="275.7" cy="107.6" r="2.1" fill="#c2da58"/><circle cx="290.3" cy="107.6" r="2.1" fill="#c2da58"/><circle cx="304.9" cy="107.6" r="2.1" fill="#c2da58"/><circle cx="319.5" cy="107.6" r="2.1" fill="#c2da58"/><circle cx="334.1" cy="107.6" r="2.1" fill="#c2da58"/><circle cx="348.7" cy="107.6" r="2.1" fill="#c2da58"/><circle cx="363.3" cy="107.6" r="2.1" fill="#c2da58"/><circle cx="377.9" cy="107.6" r="2.1" fill="#c2da58"/><circle cx="275.7" cy="122.2" r="2.1" fill="#c2da58"/><circle cx="290.3" cy="122.2" r="2.1" fill="#c2da58"/><circle cx="304.9" cy="122.2" r="2.1" fill="#c2da58"/><circle cx="319.5" cy="122.2" r="2.1" fill="#c2da58"/><circle cx="334.1" cy="122.2" r="2.1" fill="#c2da58"/><circle cx="348.7" cy="122.2" r="2.1" fill="#c2da58"/><circle cx="363.3" cy="122.2" r="2.1" fill="#c2da58"/><circle cx="377.9" cy="122.2" r="2.1" fill="#c2da58"/><circle cx="275.7" cy="136.8" r="2.1" fill="#c2da58"/><circle cx="290.3" cy="136.8" r="2.1" fill="#c2da58"/><circle cx="304.9" cy="136.8" r="2.1" fill="#c2da58"/><circle cx="319.5" cy="136.8" r="2.1" fill="#c2da58"/><circle cx="334.1" cy="136.8" r="2.1" fill="#c2da58"/><circle cx="348.7" cy="136.8" r="2.1" fill="#c2da58"/><circle cx="363.3" cy="136.8" r="2.1" fill="#c2da58"/><circle cx="377.9" cy="136.8" r="2.1" fill="#c2da58"/><circle cx="275.7" cy="151.4" r="2.1" fill="#c2da58"/><circle cx="290.3" cy="151.4" r="2.1" fill="#c2da58"/><circle cx="304.9" cy="151.4" r="2.1" fill="#c2da58"/><circle cx="319.5" cy="151.4" r="2.1" fill="#c2da58"/><circle cx="334.1" cy="151.4" r="2.1" fill="#c2da58"/><circle cx="348.7" cy="151.4" r="2.1" fill="#c2da58"/><circle cx="363.3" cy="151.4" r="2.1" fill="#c2da58"/><circle cx="377.9" cy="151.4" r="2.1" fill="#c2da58"/><circle cx="275.7" cy="166.0" r="2.1" fill="#c2da58"/><circle cx="290.3" cy="166.0" r="2.1" fill="#c2da58"/><circle cx="304.9" cy="166.0" r="2.1" fill="#c2da58"/><circle cx="319.5" cy="166.0" r="2.1" fill="#c2da58"/><circle cx="334.1" cy="166.0" r="2.1" fill="#c2da58"/><circle cx="348.7" cy="166.0" r="2.1" fill="#c2da58"/><circle cx="363.3" cy="166.0" r="2.1" fill="#c2da58"/><circle cx="377.9" cy="166.0" r="2.1" fill="#c2da58"/><circle cx="275.7" cy="180.6" r="2.1" fill="#c2da58"/><circle cx="290.3" cy="180.6" r="2.1" fill="#c2da58"/><circle cx="304.9" cy="180.6" r="2.1" fill="#c2da58"/><circle cx="319.5" cy="180.6" r="2.1" fill="#c2da58"/><circle cx="334.1" cy="180.6" r="2.1" fill="#c2da58"/><circle cx="348.7" cy="180.6" r="2.1" fill="#c2da58"/><circle cx="363.3" cy="180.6" r="2.1" fill="#c2da58"/><circle cx="377.9" cy="180.6" r="2.1" fill="#c2da58"/><circle cx="275.7" cy="195.2" r="2.1" fill="#c2da58"/><circle cx="290.3" cy="195.2" r="2.1" fill="#c2da58"/><circle cx="304.9" cy="195.2" r="2.1" fill="#c2da58"/><circle cx="319.5" cy="195.2" r="2.1" fill="#c2da58"/><circle cx="334.1" cy="195.2" r="2.1" fill="#c2da58"/><circle cx="348.7" cy="195.2" r="2.1" fill="#c2da58"/><circle cx="363.3" cy="195.2" r="2.1" fill="#c2da58"/><circle cx="377.9" cy="195.2" r="2.1" fill="#c2da58"/><circle cx="302.4" cy="102.7" r="1.4" fill="#a838b0"/><circle cx="316" cy="97.8" r="1.4" fill="#a838b0"/><circle cx="330.4" cy="96.5" r="1.4" fill="#a838b0"/><circle cx="289.2" cy="115.9" r="1.4" fill="#a838b0"/><circle cx="284.2" cy="123.3" r="1.4" fill="#a838b0"/><circle cx="281" cy="155.5" r="1.4" fill="#a838b0"/><circle cx="284.2" cy="164.5" r="1.4" fill="#a838b0"/><circle cx="302.4" cy="185.2" r="1.4" fill="#a838b0"/><circle cx="307.7" cy="188.4" r="1.4" fill="#a838b0"/><circle cx="330.4" cy="191.3" r="1.4" fill="#a838b0"/><circle cx="365.5" cy="118.4" r="1.4" fill="#a838b0"/><circle cx="370.8" cy="156.3" r="1.4" fill="#a838b0"/><circle cx="367.5" cy="168.7" r="1.4" fill="#a838b0"/><circle cx="361.3" cy="113" r="1.4" fill="#a838b0"/><circle cx="345" cy="97" r="1.4" fill="#a838b0"/><circle cx="350" cy="190" r="1.4" fill="#a838b0"/><circle cx="293.8" cy="110.9" r="2.1" fill="#48dce0"/><circle cx="359.9" cy="110.9" r="2.1" fill="#48dce0"/><circle cx="293.5" cy="177.7" r="2.1" fill="#48dce0"/><circle cx="359.5" cy="177.7" r="2.1" fill="#48dce0"/><circle cx="279.6" cy="143.8" r="2" fill="#5a50d8"/><circle cx="374" cy="143.8" r="2" fill="#5a50d8"/><circle cx="326.8" cy="77.8" r="1.9" fill="#d02030"/><circle cx="326.5" cy="210.7" r="1.9" fill="#d02030"/></svg>
<div style="position:absolute;left:444px;top:66.13px;font-size:7px;line-height:7px;color:#cccccc;white-space:nowrap;">Rng -10 dBm</div>
<svg style="position:absolute;left:442px;top:72px" width="162" height="146"><line x1="18.5" y1="2.5" x2="18.5" y2="143.5" stroke="#3c3c3c" stroke-width="1"/><line x1="33.5" y1="2.5" x2="33.5" y2="143.5" stroke="#3c3c3c" stroke-width="1"/><line x1="49.5" y1="2.5" x2="49.5" y2="143.5" stroke="#3c3c3c" stroke-width="1"/><line x1="64.5" y1="2.5" x2="64.5" y2="143.5" stroke="#3c3c3c" stroke-width="1"/><line x1="80.5" y1="2.5" x2="80.5" y2="143.5" stroke="#3c3c3c" stroke-width="1"/><line x1="96.5" y1="2.5" x2="96.5" y2="143.5" stroke="#3c3c3c" stroke-width="1"/><line x1="111.5" y1="2.5" x2="111.5" y2="143.5" stroke="#3c3c3c" stroke-width="1"/><line x1="127.5" y1="2.5" x2="127.5" y2="143.5" stroke="#3c3c3c" stroke-width="1"/><line x1="142.5" y1="2.5" x2="142.5" y2="143.5" stroke="#3c3c3c" stroke-width="1"/><line x1="2.5" y1="16.5" x2="158.5" y2="16.5" stroke="#3c3c3c" stroke-width="1"/><line x1="2.5" y1="30.5" x2="158.5" y2="30.5" stroke="#3c3c3c" stroke-width="1"/><line x1="2.5" y1="44.5" x2="158.5" y2="44.5" stroke="#3c3c3c" stroke-width="1"/><line x1="2.5" y1="58.5" x2="158.5" y2="58.5" stroke="#3c3c3c" stroke-width="1"/><line x1="2.5" y1="72.5" x2="158.5" y2="72.5" stroke="#3c3c3c" stroke-width="1"/><line x1="2.5" y1="86.5" x2="158.5" y2="86.5" stroke="#3c3c3c" stroke-width="1"/><line x1="2.5" y1="100.5" x2="158.5" y2="100.5" stroke="#3c3c3c" stroke-width="1"/><line x1="2.5" y1="114.5" x2="158.5" y2="114.5" stroke="#3c3c3c" stroke-width="1"/><line x1="2.5" y1="128.5" x2="158.5" y2="128.5" stroke="#3c3c3c" stroke-width="1"/><rect x="2.5" y="2.5" width="156.0" height="141.0" fill="none" stroke="#6a6a6a" stroke-width="1"/></svg>
<div style="position:absolute;left:452px;top:75.18px;font-size:10px;line-height:10px;color:#4c4c4c;white-space:nowrap;letter-spacing:0.1px;text-shadow:0 0 0.6px #4c4c4c;">Trial License</div>
<div style="position:absolute;right:175px;top:74.13px;font-size:7px;line-height:7px;color:#cccccc;white-space:nowrap;">5</div>
<div style="position:absolute;right:175px;top:83.13px;font-size:7px;line-height:7px;color:#cccccc;white-space:nowrap;">%</div>
<div style="position:absolute;right:175px;top:116.13px;font-size:7px;line-height:7px;color:#cccccc;white-space:nowrap;">LinMag</div>
<div style="position:absolute;right:175px;top:149.63px;font-size:7px;line-height:7px;color:#cccccc;white-space:nowrap;">500</div>
<div style="position:absolute;right:175px;top:157.63px;font-size:7px;line-height:7px;color:#cccccc;white-space:nowrap;">m%</div>
<div style="position:absolute;right:175px;top:165.63px;font-size:7px;line-height:7px;color:#cccccc;white-space:nowrap;">/div</div>
<div style="position:absolute;right:175px;top:199.63px;font-size:7px;line-height:7px;color:#cccccc;white-space:nowrap;">0</div>
<div style="position:absolute;right:175px;top:208.63px;font-size:7px;line-height:7px;color:#cccccc;white-space:nowrap;">%</div>
<div style="position:absolute;left:444.5px;top:217.63px;font-size:7px;line-height:7px;color:#cccccc;white-space:nowrap;">Start -600&nbsp; carrier</div>
<div style="position:absolute;left:444.5px;top:225.63px;font-size:7px;line-height:7px;color:#cccccc;white-space:nowrap;">Res BW 15 kHz</div>
<div style="position:absolute;right:16.5px;top:217.63px;font-size:7px;line-height:7px;color:#cccccc;white-space:nowrap;">Stop 600&nbsp; carrier</div>
<div style="position:absolute;right:16.5px;top:225.63px;font-size:7px;line-height:7px;color:#cccccc;white-space:nowrap;">TimeLen 42&nbsp; Sym</div>
<svg style="position:absolute;left:0;top:0" width="617" height="473"><defs><linearGradient id="eg" x1="0" y1="0" x2="0" y2="1"><stop offset="0" stop-color="#78c838"/><stop offset="0.25" stop-color="#92d41c"/><stop offset="1" stop-color="#8ccf14"/></linearGradient></defs><polygon fill="url(#eg)" points="445.0,215.0 445.0,145.9 445.8,146.9 446.6,146.2 447.4,147.2 448.2,146.2 449.0,147.7 449.8,148.4 450.6,146.1 451.4,145.2 452.2,148.1 453.0,145.6 453.8,147.1 454.6,149.6 455.4,148.5 456.2,147.3 457.0,145.9 457.8,150.5 458.6,146.2 459.4,146.9 460.2,146.3 461.0,147.2 461.8,149.4 462.6,150.1 463.4,147.8 464.2,151.3 465.0,150.9 465.8,151.3 466.6,150.9 467.4,149.4 468.2,147.9 469.0,149.8 469.8,148.8 470.6,150.6 471.4,149.1 472.2,153.0 473.0,150.5 473.8,152.5 474.6,148.6 475.4,149.5 476.2,150.0 477.0,150.6 477.8,149.1 478.6,150.9 479.4,149.7 480.2,152.6 481.0,151.0 481.8,151.2 482.6,153.0 483.4,154.4 484.2,150.8 485.0,150.6 485.8,152.0 486.6,152.8 487.4,150.7 488.2,152.2 489.0,154.9 489.8,151.9 490.6,151.8 491.4,151.4 492.2,153.6 493.0,153.6 493.8,151.6 494.6,154.0 495.4,153.8 496.2,154.5 497.0,153.7 497.8,155.5 498.6,156.0 499.4,153.9 500.2,152.9 501.0,156.8 501.8,155.8 502.6,153.9 503.4,157.1 504.2,158.1 505.0,154.6 505.8,158.5 506.6,154.8 507.4,157.0 508.2,156.8 509.0,157.2 509.8,155.3 510.6,157.0 511.4,157.6 512.2,158.1 513.0,158.6 513.8,157.8 514.6,156.2 515.4,155.3 516.2,159.8 517.0,156.1 517.8,157.6 518.6,155.9 519.4,159.7 520.2,160.4 521.0,159.2 521.8,157.5 522.6,161.1 523.4,156.5 524.2,160.3 525.0,160.9 525.8,161.7 526.6,160.4 527.4,159.2 528.2,159.1 529.0,157.4 529.8,157.6 530.6,157.8 531.4,161.9 532.2,158.4 533.0,157.8 533.8,157.8 534.6,158.6 535.4,161.1 536.2,157.4 537.0,159.6 537.8,160.1 538.6,161.0 539.4,157.1 540.2,161.9 541.0,158.5 541.8,160.8 542.6,158.7 543.4,159.0 544.2,161.4 545.0,161.6 545.8,160.1 546.6,160.1 547.4,159.7 548.2,159.3 549.0,157.5 549.8,157.8 550.6,157.9 551.4,161.6 552.2,161.5 553.0,161.1 553.8,160.4 554.6,156.6 555.4,159.4 556.2,160.3 557.0,158.5 557.8,159.9 558.6,156.4 559.4,158.8 560.2,158.2 561.0,160.9 561.8,158.9 562.6,158.7 563.4,158.6 564.2,159.7 565.0,158.0 565.8,159.3 566.6,160.6 567.4,158.2 568.2,159.1 569.0,159.9 569.8,159.1 570.6,157.1 571.4,158.1 572.2,158.1 573.0,156.4 573.8,160.2 574.6,158.5 575.4,156.8 576.2,157.3 577.0,158.9 577.8,155.9 578.6,158.2 579.4,158.0 580.2,155.9 581.0,157.7 581.8,158.3 582.6,158.1 583.4,158.6 584.2,158.2 585.0,157.6 585.8,155.3 586.6,156.9 587.4,156.5 588.2,156.5 589.0,159.3 589.8,156.6 590.6,155.3 591.4,156.9 592.2,156.3 593.0,158.6 593.8,157.9 594.6,155.2 595.4,155.2 596.2,154.7 597.0,155.3 597.8,156.2 598.6,157.1 599.4,159.1 600.2,159.5 600.0,215.0"/><line x1="446.6" y1="144.5" x2="446.6" y2="149.2" stroke="#40b8c8" stroke-width="0.9"/><line x1="447.4" y1="145.9" x2="447.4" y2="150.2" stroke="#40b8c8" stroke-width="0.9"/><line x1="448.2" y1="139.7" x2="448.2" y2="149.2" stroke="#30c0a8" stroke-width="0.9"/><circle cx="448.2" cy="139.7" r="0.9" fill="#b8e0a0"/><line x1="449.0" y1="145.0" x2="449.0" y2="150.7" stroke="#28b4b4" stroke-width="0.9"/><line x1="449.8" y1="144.2" x2="449.8" y2="151.4" stroke="#30c0a8" stroke-width="0.9"/><line x1="450.6" y1="144.5" x2="450.6" y2="149.1" stroke="#50c860" stroke-width="0.9"/><line x1="451.4" y1="139.6" x2="451.4" y2="148.2" stroke="#2898a8" stroke-width="0.9"/><circle cx="451.4" cy="139.6" r="0.9" fill="#b8e0a0"/><line x1="453.0" y1="144.2" x2="453.0" y2="148.6" stroke="#30c0a8" stroke-width="0.9"/><line x1="453.8" y1="145.9" x2="453.8" y2="150.1" stroke="#40b8c8" stroke-width="0.9"/><line x1="454.6" y1="123.6" x2="454.6" y2="152.6" stroke="#50c860" stroke-width="0.9"/><circle cx="454.6" cy="123.6" r="0.9" fill="#b8e0a0"/><line x1="455.4" y1="144.8" x2="455.4" y2="151.5" stroke="#40b8c8" stroke-width="0.9"/><line x1="456.2" y1="144.9" x2="456.2" y2="150.3" stroke="#28b4b4" stroke-width="0.9"/><line x1="457.0" y1="142.8" x2="457.0" y2="148.9" stroke="#70d040" stroke-width="0.9"/><line x1="457.8" y1="147.9" x2="457.8" y2="153.5" stroke="#2898a8" stroke-width="0.9"/><line x1="458.6" y1="145.0" x2="458.6" y2="149.2" stroke="#2898a8" stroke-width="0.9"/><line x1="459.4" y1="128.8" x2="459.4" y2="149.9" stroke="#40b8c8" stroke-width="0.9"/><line x1="460.2" y1="145.9" x2="460.2" y2="149.3" stroke="#50c860" stroke-width="0.9"/><line x1="461.0" y1="141.8" x2="461.0" y2="150.2" stroke="#50c860" stroke-width="0.9"/><line x1="461.8" y1="142.1" x2="461.8" y2="152.4" stroke="#50c860" stroke-width="0.9"/><circle cx="461.8" cy="142.1" r="0.9" fill="#b8e0a0"/><line x1="462.6" y1="140.6" x2="462.6" y2="153.1" stroke="#28b4b4" stroke-width="0.9"/><circle cx="462.6" cy="140.6" r="0.9" fill="#b8e0a0"/><line x1="463.4" y1="129.7" x2="463.4" y2="150.8" stroke="#2898a8" stroke-width="0.9"/><line x1="464.2" y1="150.5" x2="464.2" y2="154.3" stroke="#28b4b4" stroke-width="0.9"/><line x1="465.0" y1="140.9" x2="465.0" y2="153.9" stroke="#70d040" stroke-width="0.9"/><circle cx="465.0" cy="140.9" r="0.9" fill="#b8e0a0"/><line x1="465.8" y1="142.5" x2="465.8" y2="154.3" stroke="#70d040" stroke-width="0.9"/><circle cx="465.8" cy="142.5" r="0.9" fill="#b8e0a0"/><line x1="466.6" y1="131.4" x2="466.6" y2="153.9" stroke="#50c860" stroke-width="0.9"/><circle cx="466.6" cy="131.4" r="0.9" fill="#b8e0a0"/><line x1="467.4" y1="148.9" x2="467.4" y2="152.4" stroke="#30c0a8" stroke-width="0.9"/><line x1="468.2" y1="140.8" x2="468.2" y2="150.9" stroke="#30c0a8" stroke-width="0.9"/><circle cx="468.2" cy="140.8" r="0.9" fill="#b8e0a0"/><line x1="469.8" y1="140.4" x2="469.8" y2="151.8" stroke="#50c860" stroke-width="0.9"/><circle cx="469.8" cy="140.4" r="0.9" fill="#b8e0a0"/><line x1="470.6" y1="143.0" x2="470.6" y2="153.6" stroke="#30c0a8" stroke-width="0.9"/><circle cx="470.6" cy="143.0" r="0.9" fill="#b8e0a0"/><line x1="471.4" y1="135.6" x2="471.4" y2="152.1" stroke="#28b4b4" stroke-width="0.9"/><circle cx="471.4" cy="135.6" r="0.9" fill="#b8e0a0"/><line x1="472.2" y1="151.5" x2="472.2" y2="156.0" stroke="#40b8c8" stroke-width="0.9"/><line x1="473.0" y1="150.5" x2="473.0" y2="153.5" stroke="#30c0a8" stroke-width="0.9"/><line x1="474.6" y1="147.9" x2="474.6" y2="151.6" stroke="#70d040" stroke-width="0.9"/><line x1="475.4" y1="145.5" x2="475.4" y2="152.5" stroke="#70d040" stroke-width="0.9"/><line x1="476.2" y1="133.7" x2="476.2" y2="153.0" stroke="#70d040" stroke-width="0.9"/><line x1="477.0" y1="148.2" x2="477.0" y2="153.6" stroke="#50c860" stroke-width="0.9"/><line x1="477.8" y1="135.5" x2="477.8" y2="152.1" stroke="#50c860" stroke-width="0.9"/><circle cx="477.8" cy="135.5" r="0.9" fill="#b8e0a0"/><line x1="478.6" y1="132.0" x2="478.6" y2="153.9" stroke="#2898a8" stroke-width="0.9"/><circle cx="478.6" cy="132.0" r="0.9" fill="#b8e0a0"/><line x1="479.4" y1="145.3" x2="479.4" y2="152.7" stroke="#28b4b4" stroke-width="0.9"/><line x1="480.2" y1="150.8" x2="480.2" y2="155.6" stroke="#40b8c8" stroke-width="0.9"/><line x1="481.8" y1="148.7" x2="481.8" y2="154.2" stroke="#50c860" stroke-width="0.9"/><line x1="482.6" y1="150.1" x2="482.6" y2="156.0" stroke="#2898a8" stroke-width="0.9"/><line x1="483.4" y1="144.9" x2="483.4" y2="157.4" stroke="#50c860" stroke-width="0.9"/><circle cx="483.4" cy="144.9" r="0.9" fill="#b8e0a0"/><line x1="484.2" y1="146.4" x2="484.2" y2="153.8" stroke="#2898a8" stroke-width="0.9"/><line x1="485.0" y1="148.0" x2="485.0" y2="153.6" stroke="#30c0a8" stroke-width="0.9"/><line x1="485.8" y1="151.0" x2="485.8" y2="155.0" stroke="#2898a8" stroke-width="0.9"/><line x1="486.6" y1="134.2" x2="486.6" y2="155.8" stroke="#30c0a8" stroke-width="0.9"/><line x1="488.2" y1="146.7" x2="488.2" y2="155.2" stroke="#40b8c8" stroke-width="0.9"/><line x1="489.0" y1="146.5" x2="489.0" y2="157.9" stroke="#2898a8" stroke-width="0.9"/><line x1="489.8" y1="147.4" x2="489.8" y2="154.9" stroke="#70d040" stroke-width="0.9"/><line x1="490.6" y1="150.9" x2="490.6" y2="154.8" stroke="#30c0a8" stroke-width="0.9"/><line x1="491.4" y1="129.0" x2="491.4" y2="154.4" stroke="#28b4b4" stroke-width="0.9"/><circle cx="491.4" cy="129.0" r="0.9" fill="#b8e0a0"/><line x1="492.2" y1="145.5" x2="492.2" y2="156.6" stroke="#50c860" stroke-width="0.9"/><line x1="493.0" y1="150.4" x2="493.0" y2="156.6" stroke="#28b4b4" stroke-width="0.9"/><line x1="494.6" y1="148.9" x2="494.6" y2="157.0" stroke="#30c0a8" stroke-width="0.9"/><line x1="495.4" y1="151.4" x2="495.4" y2="156.8" stroke="#2898a8" stroke-width="0.9"/><line x1="496.2" y1="154.3" x2="496.2" y2="157.5" stroke="#40b8c8" stroke-width="0.9"/><line x1="497.0" y1="153.2" x2="497.0" y2="156.7" stroke="#2898a8" stroke-width="0.9"/><line x1="497.8" y1="155.3" x2="497.8" y2="158.5" stroke="#70d040" stroke-width="0.9"/><line x1="498.6" y1="154.9" x2="498.6" y2="159.0" stroke="#2898a8" stroke-width="0.9"/><line x1="499.4" y1="145.5" x2="499.4" y2="156.9" stroke="#40b8c8" stroke-width="0.9"/><line x1="500.2" y1="145.5" x2="500.2" y2="155.9" stroke="#70d040" stroke-width="0.9"/><circle cx="500.2" cy="145.5" r="0.9" fill="#b8e0a0"/><line x1="501.0" y1="153.1" x2="501.0" y2="159.8" stroke="#30c0a8" stroke-width="0.9"/><line x1="501.8" y1="154.4" x2="501.8" y2="158.8" stroke="#30c0a8" stroke-width="0.9"/><line x1="502.6" y1="139.4" x2="502.6" y2="156.9" stroke="#2898a8" stroke-width="0.9"/><circle cx="502.6" cy="139.4" r="0.9" fill="#b8e0a0"/><line x1="503.4" y1="153.1" x2="503.4" y2="160.1" stroke="#50c860" stroke-width="0.9"/><line x1="504.2" y1="154.2" x2="504.2" y2="161.1" stroke="#28b4b4" stroke-width="0.9"/><line x1="505.0" y1="144.5" x2="505.0" y2="157.6" stroke="#50c860" stroke-width="0.9"/><circle cx="505.0" cy="144.5" r="0.9" fill="#b8e0a0"/><line x1="505.8" y1="156.1" x2="505.8" y2="161.5" stroke="#2898a8" stroke-width="0.9"/><line x1="506.6" y1="138.3" x2="506.6" y2="157.8" stroke="#70d040" stroke-width="0.9"/><circle cx="506.6" cy="138.3" r="0.9" fill="#b8e0a0"/><line x1="508.2" y1="142.5" x2="508.2" y2="159.8" stroke="#30c0a8" stroke-width="0.9"/><circle cx="508.2" cy="142.5" r="0.9" fill="#b8e0a0"/><line x1="509.0" y1="154.8" x2="509.0" y2="160.2" stroke="#2898a8" stroke-width="0.9"/><line x1="509.8" y1="137.8" x2="509.8" y2="158.3" stroke="#28b4b4" stroke-width="0.9"/><line x1="510.6" y1="155.1" x2="510.6" y2="160.0" stroke="#50c860" stroke-width="0.9"/><line x1="511.4" y1="156.8" x2="511.4" y2="160.6" stroke="#30c0a8" stroke-width="0.9"/><line x1="512.2" y1="157.8" x2="512.2" y2="161.1" stroke="#40b8c8" stroke-width="0.9"/><line x1="513.0" y1="138.2" x2="513.0" y2="161.6" stroke="#70d040" stroke-width="0.9"/><line x1="513.8" y1="153.1" x2="513.8" y2="160.8" stroke="#2898a8" stroke-width="0.9"/><line x1="515.4" y1="152.7" x2="515.4" y2="158.3" stroke="#28b4b4" stroke-width="0.9"/><line x1="516.2" y1="155.0" x2="516.2" y2="162.8" stroke="#30c0a8" stroke-width="0.9"/><line x1="517.0" y1="151.3" x2="517.0" y2="159.1" stroke="#40b8c8" stroke-width="0.9"/><line x1="517.8" y1="154.0" x2="517.8" y2="160.6" stroke="#40b8c8" stroke-width="0.9"/><line x1="519.4" y1="159.6" x2="519.4" y2="162.7" stroke="#40b8c8" stroke-width="0.9"/><line x1="520.2" y1="155.1" x2="520.2" y2="163.4" stroke="#28b4b4" stroke-width="0.9"/><circle cx="520.2" cy="155.1" r="0.9" fill="#b8e0a0"/><line x1="521.0" y1="148.1" x2="521.0" y2="162.2" stroke="#50c860" stroke-width="0.9"/><line x1="521.8" y1="154.6" x2="521.8" y2="160.5" stroke="#70d040" stroke-width="0.9"/><line x1="522.6" y1="147.9" x2="522.6" y2="164.1" stroke="#28b4b4" stroke-width="0.9"/><line x1="523.4" y1="155.1" x2="523.4" y2="159.5" stroke="#30c0a8" stroke-width="0.9"/><line x1="524.2" y1="149.7" x2="524.2" y2="163.3" stroke="#30c0a8" stroke-width="0.9"/><circle cx="524.2" cy="149.7" r="0.9" fill="#b8e0a0"/><line x1="525.8" y1="157.9" x2="525.8" y2="164.7" stroke="#70d040" stroke-width="0.9"/><line x1="527.4" y1="155.1" x2="527.4" y2="162.2" stroke="#30c0a8" stroke-width="0.9"/><line x1="528.2" y1="155.0" x2="528.2" y2="162.1" stroke="#28b4b4" stroke-width="0.9"/><line x1="529.0" y1="144.4" x2="529.0" y2="160.4" stroke="#30c0a8" stroke-width="0.9"/><line x1="529.8" y1="152.5" x2="529.8" y2="160.6" stroke="#28b4b4" stroke-width="0.9"/><line x1="530.6" y1="155.6" x2="530.6" y2="160.8" stroke="#70d040" stroke-width="0.9"/><line x1="531.4" y1="152.0" x2="531.4" y2="164.9" stroke="#2898a8" stroke-width="0.9"/><circle cx="531.4" cy="152.0" r="0.9" fill="#b8e0a0"/><line x1="532.2" y1="158.3" x2="532.2" y2="161.4" stroke="#40b8c8" stroke-width="0.9"/><line x1="533.0" y1="153.0" x2="533.0" y2="160.8" stroke="#30c0a8" stroke-width="0.9"/><line x1="533.8" y1="156.7" x2="533.8" y2="160.8" stroke="#2898a8" stroke-width="0.9"/><line x1="534.6" y1="145.7" x2="534.6" y2="161.6" stroke="#50c860" stroke-width="0.9"/><line x1="535.4" y1="158.0" x2="535.4" y2="164.1" stroke="#40b8c8" stroke-width="0.9"/><line x1="536.2" y1="154.6" x2="536.2" y2="160.4" stroke="#50c860" stroke-width="0.9"/><line x1="537.0" y1="155.5" x2="537.0" y2="162.6" stroke="#28b4b4" stroke-width="0.9"/><line x1="537.8" y1="157.3" x2="537.8" y2="163.1" stroke="#50c860" stroke-width="0.9"/><line x1="539.4" y1="153.9" x2="539.4" y2="160.1" stroke="#30c0a8" stroke-width="0.9"/><line x1="540.2" y1="146.9" x2="540.2" y2="164.9" stroke="#70d040" stroke-width="0.9"/><line x1="541.0" y1="152.7" x2="541.0" y2="161.5" stroke="#28b4b4" stroke-width="0.9"/><line x1="541.8" y1="138.4" x2="541.8" y2="163.8" stroke="#28b4b4" stroke-width="0.9"/><line x1="542.6" y1="156.4" x2="542.6" y2="161.7" stroke="#28b4b4" stroke-width="0.9"/><line x1="543.4" y1="156.8" x2="543.4" y2="162.0" stroke="#2898a8" stroke-width="0.9"/><line x1="544.2" y1="159.2" x2="544.2" y2="164.4" stroke="#30c0a8" stroke-width="0.9"/><line x1="545.0" y1="157.3" x2="545.0" y2="164.6" stroke="#70d040" stroke-width="0.9"/><line x1="545.8" y1="158.2" x2="545.8" y2="163.1" stroke="#2898a8" stroke-width="0.9"/><line x1="546.6" y1="159.2" x2="546.6" y2="163.1" stroke="#50c860" stroke-width="0.9"/><line x1="547.4" y1="156.8" x2="547.4" y2="162.7" stroke="#30c0a8" stroke-width="0.9"/><line x1="548.2" y1="152.7" x2="548.2" y2="162.3" stroke="#70d040" stroke-width="0.9"/><circle cx="548.2" cy="152.7" r="0.9" fill="#b8e0a0"/><line x1="549.0" y1="155.6" x2="549.0" y2="160.5" stroke="#30c0a8" stroke-width="0.9"/><line x1="551.4" y1="156.6" x2="551.4" y2="164.6" stroke="#30c0a8" stroke-width="0.9"/><line x1="552.2" y1="155.4" x2="552.2" y2="164.5" stroke="#30c0a8" stroke-width="0.9"/><circle cx="552.2" cy="155.4" r="0.9" fill="#b8e0a0"/><line x1="553.0" y1="151.1" x2="553.0" y2="164.1" stroke="#28b4b4" stroke-width="0.9"/><circle cx="553.0" cy="151.1" r="0.9" fill="#b8e0a0"/><line x1="553.8" y1="157.3" x2="553.8" y2="163.4" stroke="#2898a8" stroke-width="0.9"/><line x1="554.6" y1="140.1" x2="554.6" y2="159.6" stroke="#2898a8" stroke-width="0.9"/><line x1="555.4" y1="150.8" x2="555.4" y2="162.4" stroke="#40b8c8" stroke-width="0.9"/><line x1="556.2" y1="151.5" x2="556.2" y2="163.3" stroke="#40b8c8" stroke-width="0.9"/><circle cx="556.2" cy="151.5" r="0.9" fill="#b8e0a0"/><line x1="557.0" y1="153.0" x2="557.0" y2="161.5" stroke="#30c0a8" stroke-width="0.9"/><line x1="557.8" y1="158.6" x2="557.8" y2="162.9" stroke="#2898a8" stroke-width="0.9"/><line x1="559.4" y1="149.5" x2="559.4" y2="161.8" stroke="#50c860" stroke-width="0.9"/><line x1="560.2" y1="138.7" x2="560.2" y2="161.2" stroke="#30c0a8" stroke-width="0.9"/><line x1="561.0" y1="159.0" x2="561.0" y2="163.9" stroke="#2898a8" stroke-width="0.9"/><line x1="561.8" y1="155.6" x2="561.8" y2="161.9" stroke="#50c860" stroke-width="0.9"/><line x1="562.6" y1="145.5" x2="562.6" y2="161.7" stroke="#40b8c8" stroke-width="0.9"/><circle cx="562.6" cy="145.5" r="0.9" fill="#b8e0a0"/><line x1="564.2" y1="155.2" x2="564.2" y2="162.7" stroke="#2898a8" stroke-width="0.9"/><line x1="565.0" y1="155.6" x2="565.0" y2="161.0" stroke="#40b8c8" stroke-width="0.9"/><line x1="565.8" y1="158.8" x2="565.8" y2="162.3" stroke="#2898a8" stroke-width="0.9"/><line x1="566.6" y1="159.5" x2="566.6" y2="163.6" stroke="#2898a8" stroke-width="0.9"/><line x1="567.4" y1="146.5" x2="567.4" y2="161.2" stroke="#40b8c8" stroke-width="0.9"/><circle cx="567.4" cy="146.5" r="0.9" fill="#b8e0a0"/><line x1="568.2" y1="151.6" x2="568.2" y2="162.1" stroke="#40b8c8" stroke-width="0.9"/><line x1="569.0" y1="157.2" x2="569.0" y2="162.9" stroke="#70d040" stroke-width="0.9"/><line x1="569.8" y1="156.3" x2="569.8" y2="162.1" stroke="#30c0a8" stroke-width="0.9"/><line x1="570.6" y1="155.8" x2="570.6" y2="160.1" stroke="#30c0a8" stroke-width="0.9"/><line x1="571.4" y1="151.1" x2="571.4" y2="161.1" stroke="#40b8c8" stroke-width="0.9"/><circle cx="571.4" cy="151.1" r="0.9" fill="#b8e0a0"/><line x1="572.2" y1="153.7" x2="572.2" y2="161.1" stroke="#50c860" stroke-width="0.9"/><line x1="573.0" y1="154.3" x2="573.0" y2="159.4" stroke="#70d040" stroke-width="0.9"/><line x1="573.8" y1="159.5" x2="573.8" y2="163.2" stroke="#40b8c8" stroke-width="0.9"/><line x1="574.6" y1="157.5" x2="574.6" y2="161.5" stroke="#50c860" stroke-width="0.9"/><line x1="575.4" y1="156.1" x2="575.4" y2="159.8" stroke="#2898a8" stroke-width="0.9"/><line x1="576.2" y1="147.2" x2="576.2" y2="160.3" stroke="#30c0a8" stroke-width="0.9"/><line x1="578.6" y1="156.7" x2="578.6" y2="161.2" stroke="#30c0a8" stroke-width="0.9"/><line x1="579.4" y1="155.6" x2="579.4" y2="161.0" stroke="#70d040" stroke-width="0.9"/><line x1="580.2" y1="148.5" x2="580.2" y2="158.9" stroke="#70d040" stroke-width="0.9"/><circle cx="580.2" cy="148.5" r="0.9" fill="#b8e0a0"/><line x1="581.0" y1="154.8" x2="581.0" y2="160.7" stroke="#70d040" stroke-width="0.9"/><line x1="581.8" y1="157.5" x2="581.8" y2="161.3" stroke="#40b8c8" stroke-width="0.9"/><line x1="582.6" y1="150.3" x2="582.6" y2="161.1" stroke="#2898a8" stroke-width="0.9"/><line x1="583.4" y1="156.7" x2="583.4" y2="161.6" stroke="#28b4b4" stroke-width="0.9"/><line x1="584.2" y1="146.9" x2="584.2" y2="161.2" stroke="#28b4b4" stroke-width="0.9"/><line x1="585.8" y1="151.2" x2="585.8" y2="158.3" stroke="#40b8c8" stroke-width="0.9"/><line x1="586.6" y1="153.8" x2="586.6" y2="159.9" stroke="#30c0a8" stroke-width="0.9"/><line x1="587.4" y1="155.3" x2="587.4" y2="159.5" stroke="#50c860" stroke-width="0.9"/><line x1="588.2" y1="154.3" x2="588.2" y2="159.5" stroke="#50c860" stroke-width="0.9"/><line x1="589.0" y1="158.4" x2="589.0" y2="162.3" stroke="#28b4b4" stroke-width="0.9"/><line x1="589.8" y1="155.1" x2="589.8" y2="159.6" stroke="#40b8c8" stroke-width="0.9"/><line x1="591.4" y1="154.7" x2="591.4" y2="159.9" stroke="#2898a8" stroke-width="0.9"/><line x1="592.2" y1="155.5" x2="592.2" y2="159.3" stroke="#70d040" stroke-width="0.9"/><line x1="593.0" y1="155.8" x2="593.0" y2="161.6" stroke="#2898a8" stroke-width="0.9"/><line x1="593.8" y1="153.0" x2="593.8" y2="160.9" stroke="#40b8c8" stroke-width="0.9"/><line x1="594.6" y1="151.1" x2="594.6" y2="158.2" stroke="#30c0a8" stroke-width="0.9"/><line x1="595.4" y1="155.1" x2="595.4" y2="158.2" stroke="#40b8c8" stroke-width="0.9"/><line x1="597.0" y1="150.3" x2="597.0" y2="158.3" stroke="#30c0a8" stroke-width="0.9"/><circle cx="597.0" cy="150.3" r="0.9" fill="#b8e0a0"/><line x1="597.8" y1="152.1" x2="597.8" y2="159.2" stroke="#28b4b4" stroke-width="0.9"/><line x1="598.6" y1="150.0" x2="598.6" y2="160.1" stroke="#2898a8" stroke-width="0.9"/><line x1="599.4" y1="159.1" x2="599.4" y2="162.1" stroke="#70d040" stroke-width="0.9"/><line x1="600.2" y1="158.8" x2="600.2" y2="162.5" stroke="#70d040" stroke-width="0.9"/><rect x="461.2" y="194.1" width="1" height="1" fill="#b0e040"/><rect x="583.4" y="193.1" width="1" height="1" fill="#70c030"/><rect x="446.2" y="196.3" width="1" height="1" fill="#b0e040"/><rect x="597.4" y="206.1" width="1" height="1" fill="#b0e040"/><rect x="579.4" y="165.2" width="1" height="1" fill="#b0e040"/><rect x="487.9" y="189.9" width="1" height="1" fill="#70c030"/><rect x="558.5" y="168.5" width="1" height="1" fill="#b0e040"/><rect x="501.8" y="199.8" width="1" height="1" fill="#a8d830"/><rect x="577.2" y="198.9" width="1" height="1" fill="#b0e040"/><rect x="490.6" y="189.2" width="1" height="1" fill="#70c030"/><rect x="516.4" y="210.2" width="1" height="1" fill="#70c030"/><rect x="586.2" y="160.9" width="1" height="1" fill="#b0e040"/><rect x="447.3" y="158.8" width="1" height="1" fill="#a8d830"/><rect x="551.2" y="192.6" width="1" height="1" fill="#70c030"/><rect x="493.4" y="198.8" width="1" height="1" fill="#b0e040"/><rect x="593.0" y="204.8" width="1" height="1" fill="#a8d830"/><rect x="454.7" y="178.6" width="1" height="1" fill="#a8d830"/><rect x="557.6" y="184.3" width="1" height="1" fill="#b0e040"/><rect x="467.8" y="202.7" width="1" height="1" fill="#70c030"/><rect x="592.4" y="167.2" width="1" height="1" fill="#70c030"/><rect x="519.0" y="201.6" width="1" height="1" fill="#70c030"/><rect x="591.0" y="201.9" width="1" height="1" fill="#a8d830"/><rect x="496.9" y="173.7" width="1" height="1" fill="#a8d830"/><rect x="595.5" y="197.4" width="1" height="1" fill="#a8d830"/><rect x="496.6" y="191.9" width="1" height="1" fill="#b0e040"/><rect x="573.5" y="191.7" width="1" height="1" fill="#70c030"/><rect x="535.5" y="212.7" width="1" height="1" fill="#b0e040"/><rect x="503.5" y="196.4" width="1" height="1" fill="#a8d830"/><rect x="564.3" y="171.1" width="1" height="1" fill="#70c030"/><rect x="489.1" y="158.1" width="1" height="1" fill="#70c030"/><rect x="486.8" y="166.8" width="1" height="1" fill="#b0e040"/><rect x="489.9" y="165.9" width="1" height="1" fill="#a8d830"/><rect x="468.1" y="212.6" width="1" height="1" fill="#a8d830"/><rect x="550.9" y="209.2" width="1" height="1" fill="#70c030"/><rect x="527.8" y="188.2" width="1" height="1" fill="#70c030"/><rect x="568.3" y="169.2" width="1" height="1" fill="#a8d830"/><rect x="589.0" y="171.1" width="1" height="1" fill="#a8d830"/><rect x="454.4" y="180.1" width="1" height="1" fill="#a8d830"/><rect x="477.3" y="172.3" width="1" height="1" fill="#b0e040"/><rect x="567.4" y="183.7" width="1" height="1" fill="#b0e040"/><rect x="528.1" y="177.9" width="1" height="1" fill="#b0e040"/><rect x="481.4" y="190.5" width="1" height="1" fill="#70c030"/><rect x="581.8" y="187.2" width="1" height="1" fill="#70c030"/><rect x="523.4" y="169.3" width="1" height="1" fill="#b0e040"/><rect x="475.1" y="168.1" width="1" height="1" fill="#a8d830"/><rect x="490.1" y="190.4" width="1" height="1" fill="#70c030"/><rect x="507.5" y="187.0" width="1" height="1" fill="#b0e040"/><rect x="483.4" y="209.7" width="1" height="1" fill="#70c030"/><rect x="503.1" y="163.9" width="1" height="1" fill="#a8d830"/><rect x="516.9" y="162.6" width="1" height="1" fill="#70c030"/><rect x="537.5" y="177.3" width="1" height="1" fill="#a8d830"/><rect x="539.0" y="163.3" width="1" height="1" fill="#b0e040"/><rect x="598.0" y="206.5" width="1" height="1" fill="#70c030"/><rect x="535.9" y="170.0" width="1" height="1" fill="#70c030"/><rect x="511.1" y="211.0" width="1" height="1" fill="#a8d830"/><rect x="571.6" y="212.0" width="1" height="1" fill="#70c030"/><rect x="575.4" y="177.0" width="1" height="1" fill="#b0e040"/><rect x="503.7" y="159.5" width="1" height="1" fill="#b0e040"/><rect x="531.3" y="206.8" width="1" height="1" fill="#70c030"/><rect x="520.5" y="205.4" width="1" height="1" fill="#b0e040"/><rect x="578.4" y="193.8" width="1" height="1" fill="#b0e040"/><rect x="554.3" y="163.0" width="1" height="1" fill="#70c030"/><rect x="532.4" y="193.9" width="1" height="1" fill="#a8d830"/><rect x="523.5" y="168.2" width="1" height="1" fill="#b0e040"/><rect x="502.6" y="171.2" width="1" height="1" fill="#a8d830"/><rect x="479.6" y="160.2" width="1" height="1" fill="#70c030"/><rect x="590.4" y="161.3" width="1" height="1" fill="#a8d830"/><rect x="584.8" y="204.9" width="1" height="1" fill="#b0e040"/><rect x="485.2" y="186.7" width="1" height="1" fill="#a8d830"/><rect x="545.1" y="213.2" width="1" height="1" fill="#b0e040"/><rect x="461.1" y="175.8" width="1" height="1" fill="#b0e040"/><rect x="590.2" y="195.9" width="1" height="1" fill="#70c030"/><rect x="536.3" y="182.7" width="1" height="1" fill="#a8d830"/><rect x="461.7" y="176.1" width="1" height="1" fill="#70c030"/><rect x="505.6" y="179.0" width="1" height="1" fill="#70c030"/><rect x="471.5" y="171.4" width="1" height="1" fill="#b0e040"/><rect x="586.3" y="208.0" width="1" height="1" fill="#70c030"/><rect x="556.0" y="168.9" width="1" height="1" fill="#b0e040"/><rect x="469.7" y="204.6" width="1" height="1" fill="#b0e040"/><rect x="589.3" y="206.5" width="1" height="1" fill="#a8d830"/><rect x="467.0" y="183.0" width="1" height="1" fill="#b0e040"/><rect x="588.1" y="179.6" width="1" height="1" fill="#b0e040"/><rect x="542.3" y="183.3" width="1" height="1" fill="#70c030"/><rect x="495.2" y="171.1" width="1" height="1" fill="#b0e040"/><rect x="542.2" y="166.0" width="1" height="1" fill="#b0e040"/><rect x="558.9" y="168.1" width="1" height="1" fill="#70c030"/><rect x="530.7" y="166.1" width="1" height="1" fill="#b0e040"/><rect x="486.5" y="181.1" width="1" height="1" fill="#b0e040"/><rect x="449.4" y="190.0" width="1" height="1" fill="#70c030"/><rect x="497.0" y="167.4" width="1" height="1" fill="#70c030"/><rect x="462.3" y="183.5" width="1" height="1" fill="#70c030"/><rect x="463.1" y="212.8" width="1" height="1" fill="#b0e040"/><rect x="542.7" y="202.1" width="1" height="1" fill="#b0e040"/><rect x="531.7" y="204.8" width="1" height="1" fill="#b0e040"/><rect x="485.2" y="169.3" width="1" height="1" fill="#70c030"/><rect x="512.0" y="172.6" width="1" height="1" fill="#b0e040"/><rect x="588.0" y="163.5" width="1" height="1" fill="#70c030"/><rect x="509.5" y="167.1" width="1" height="1" fill="#a8d830"/><rect x="596.2" y="166.1" width="1" height="1" fill="#a8d830"/><rect x="448.0" y="203.2" width="1" height="1" fill="#70c030"/><rect x="524.2" y="182.8" width="1" height="1" fill="#a8d830"/><rect x="489.6" y="178.2" width="1" height="1" fill="#b0e040"/><rect x="585.9" y="170.2" width="1" height="1" fill="#a8d830"/><rect x="473.3" y="205.2" width="1" height="1" fill="#a8d830"/><rect x="564.1" y="197.9" width="1" height="1" fill="#b0e040"/><rect x="538.0" y="204.4" width="1" height="1" fill="#a8d830"/><rect x="558.1" y="200.6" width="1" height="1" fill="#b0e040"/><rect x="477.2" y="192.3" width="1" height="1" fill="#a8d830"/><rect x="542.3" y="168.8" width="1" height="1" fill="#70c030"/><rect x="476.7" y="161.7" width="1" height="1" fill="#a8d830"/><rect x="525.5" y="205.1" width="1" height="1" fill="#b0e040"/><rect x="525.3" y="177.5" width="1" height="1" fill="#70c030"/><rect x="575.2" y="206.4" width="1" height="1" fill="#70c030"/><rect x="459.4" y="180.9" width="1" height="1" fill="#70c030"/><rect x="466.0" y="195.3" width="1" height="1" fill="#b0e040"/><rect x="474.2" y="204.6" width="1" height="1" fill="#70c030"/><rect x="451.1" y="197.3" width="1" height="1" fill="#a8d830"/><rect x="537.1" y="158.3" width="1" height="1" fill="#a8d830"/><rect x="589.0" y="212.2" width="1" height="1" fill="#b0e040"/><rect x="464.1" y="198.0" width="1" height="1" fill="#70c030"/><rect x="565.5" y="206.6" width="1" height="1" fill="#a8d830"/><rect x="561.2" y="161.4" width="1" height="1" fill="#b0e040"/><rect x="592.4" y="185.7" width="1" height="1" fill="#a8d830"/><rect x="449.4" y="203.1" width="1" height="1" fill="#b0e040"/><rect x="448.7" y="212.2" width="1" height="1" fill="#b0e040"/><rect x="540.8" y="167.4" width="1" height="1" fill="#70c030"/><rect x="484.1" y="203.8" width="1" height="1" fill="#b0e040"/><rect x="448.5" y="209.9" width="1" height="1" fill="#a8d830"/><rect x="475.5" y="159.0" width="1" height="1" fill="#a8d830"/><rect x="543.6" y="184.0" width="1" height="1" fill="#b0e040"/><rect x="553.7" y="163.8" width="1" height="1" fill="#b0e040"/><rect x="555.9" y="160.5" width="1" height="1" fill="#b0e040"/><rect x="517.1" y="190.8" width="1" height="1" fill="#70c030"/><rect x="462.4" y="164.8" width="1" height="1" fill="#b0e040"/><rect x="528.9" y="170.7" width="1" height="1" fill="#b0e040"/><rect x="468.2" y="190.1" width="1" height="1" fill="#a8d830"/><rect x="506.6" y="211.1" width="1" height="1" fill="#b0e040"/><rect x="589.9" y="179.8" width="1" height="1" fill="#70c030"/><rect x="537.4" y="191.8" width="1" height="1" fill="#b0e040"/><rect x="506.4" y="210.7" width="1" height="1" fill="#70c030"/><rect x="497.6" y="171.5" width="1" height="1" fill="#70c030"/><rect x="555.7" y="205.2" width="1" height="1" fill="#a8d830"/><rect x="569.4" y="209.1" width="1" height="1" fill="#70c030"/><rect x="576.0" y="161.0" width="1" height="1" fill="#a8d830"/><rect x="468.1" y="196.1" width="1" height="1" fill="#70c030"/><rect x="483.9" y="181.6" width="1" height="1" fill="#a8d830"/><rect x="447.3" y="164.1" width="1" height="1" fill="#b0e040"/><rect x="456.2" y="182.3" width="1" height="1" fill="#a8d830"/><rect x="548.5" y="170.6" width="1" height="1" fill="#70c030"/><rect x="594.8" y="201.5" width="1" height="1" fill="#70c030"/><rect x="543.0" y="203.3" width="1" height="1" fill="#b0e040"/><rect x="450.8" y="193.9" width="1" height="1" fill="#70c030"/><rect x="586.9" y="192.9" width="1" height="1" fill="#a8d830"/><rect x="529.0" y="209.8" width="1" height="1" fill="#a8d830"/><rect x="461.0" y="164.8" width="1" height="1" fill="#b0e040"/><rect x="512.3" y="211.2" width="1" height="1" fill="#70c030"/><rect x="462.9" y="177.5" width="1" height="1" fill="#b0e040"/><rect x="464.0" y="191.3" width="1" height="1" fill="#a8d830"/><rect x="584.3" y="162.7" width="1" height="1" fill="#a8d830"/><rect x="527.7" y="166.3" width="1" height="1" fill="#b0e040"/><rect x="524.3" y="207.6" width="1" height="1" fill="#70c030"/><rect x="534.4" y="173.4" width="1" height="1" fill="#a8d830"/><rect x="459.0" y="188.6" width="1" height="1" fill="#70c030"/><rect x="539.4" y="189.9" width="1" height="1" fill="#a8d830"/><rect x="505.0" y="188.7" width="1" height="1" fill="#70c030"/><rect x="516.5" y="188.7" width="1" height="1" fill="#a8d830"/><rect x="519.1" y="203.9" width="1" height="1" fill="#b0e040"/><rect x="482.8" y="170.4" width="1" height="1" fill="#a8d830"/><rect x="529.6" y="212.3" width="1" height="1" fill="#70c030"/><rect x="447.3" y="177.7" width="1" height="1" fill="#b0e040"/><rect x="495.4" y="176.2" width="1" height="1" fill="#70c030"/><rect x="489.4" y="213.3" width="1" height="1" fill="#70c030"/><rect x="454.3" y="159.2" width="1" height="1" fill="#a8d830"/><rect x="455.8" y="206.8" width="1" height="1" fill="#70c030"/><rect x="546.8" y="187.0" width="1" height="1" fill="#70c030"/><rect x="500.0" y="200.7" width="1" height="1" fill="#a8d830"/><rect x="480.2" y="211.7" width="1" height="1" fill="#a8d830"/><rect x="589.3" y="181.3" width="1" height="1" fill="#a8d830"/><rect x="499.8" y="195.8" width="1" height="1" fill="#a8d830"/><rect x="539.6" y="173.5" width="1" height="1" fill="#a8d830"/><rect x="460.1" y="206.0" width="1" height="1" fill="#70c030"/><rect x="486.9" y="193.3" width="1" height="1" fill="#a8d830"/><rect x="586.4" y="165.1" width="1" height="1" fill="#b0e040"/><rect x="446.2" y="200.9" width="1" height="1" fill="#a8d830"/><rect x="463.6" y="180.3" width="1" height="1" fill="#a8d830"/><rect x="468.5" y="205.6" width="1" height="1" fill="#70c030"/><rect x="579.9" y="192.0" width="1" height="1" fill="#70c030"/><rect x="576.7" y="196.8" width="1" height="1" fill="#70c030"/><rect x="556.9" y="174.4" width="1" height="1" fill="#70c030"/><rect x="526.5" y="191.3" width="1" height="1" fill="#a8d830"/><rect x="495.1" y="202.1" width="1" height="1" fill="#70c030"/><rect x="504.1" y="174.8" width="1" height="1" fill="#a8d830"/><rect x="492.3" y="166.1" width="1" height="1" fill="#a8d830"/><rect x="503.6" y="171.0" width="1" height="1" fill="#70c030"/><rect x="495.4" y="205.2" width="1" height="1" fill="#b0e040"/><rect x="593.1" y="169.4" width="1" height="1" fill="#70c030"/><rect x="582.8" y="211.5" width="1" height="1" fill="#b0e040"/><rect x="452.8" y="189.6" width="1" height="1" fill="#70c030"/><rect x="491.7" y="188.0" width="1" height="1" fill="#70c030"/><rect x="528.4" y="213.9" width="1" height="1" fill="#a8d830"/><rect x="572.7" y="198.7" width="1" height="1" fill="#70c030"/><rect x="505.5" y="178.0" width="1" height="1" fill="#a8d830"/><rect x="549.6" y="183.4" width="1" height="1" fill="#b0e040"/><rect x="549.7" y="187.4" width="1" height="1" fill="#b0e040"/><rect x="508.6" y="186.1" width="1" height="1" fill="#a8d830"/><rect x="531.9" y="190.1" width="1" height="1" fill="#b0e040"/><rect x="594.0" y="185.3" width="1" height="1" fill="#70c030"/><rect x="563.7" y="208.4" width="1" height="1" fill="#a8d830"/><rect x="498.4" y="187.7" width="1" height="1" fill="#b0e040"/><rect x="471.8" y="175.8" width="1" height="1" fill="#b0e040"/><rect x="572.7" y="186.7" width="1" height="1" fill="#b0e040"/><rect x="546.5" y="174.5" width="1" height="1" fill="#70c030"/><rect x="571.9" y="213.5" width="1" height="1" fill="#70c030"/><rect x="542.7" y="187.3" width="1" height="1" fill="#a8d830"/><rect x="477.5" y="208.0" width="1" height="1" fill="#70c030"/><rect x="473.6" y="193.3" width="1" height="1" fill="#a8d830"/><rect x="461.9" y="189.9" width="1" height="1" fill="#a8d830"/><rect x="543.5" y="160.4" width="1" height="1" fill="#70c030"/><rect x="447.2" y="158.2" width="1" height="1" fill="#a8d830"/><rect x="551.9" y="158.2" width="1" height="1" fill="#70c030"/><rect x="506.7" y="163.5" width="1" height="1" fill="#b0e040"/><rect x="548.4" y="169.0" width="1" height="1" fill="#70c030"/><rect x="563.9" y="189.8" width="1" height="1" fill="#a8d830"/><rect x="583.4" y="186.8" width="1" height="1" fill="#b0e040"/><rect x="534.0" y="181.0" width="1" height="1" fill="#b0e040"/><rect x="467.9" y="187.0" width="1" height="1" fill="#a8d830"/><rect x="461.9" y="163.6" width="1" height="1" fill="#b0e040"/><rect x="591.5" y="185.5" width="1" height="1" fill="#70c030"/><rect x="539.9" y="203.2" width="1" height="1" fill="#b0e040"/><rect x="545.6" y="196.3" width="1" height="1" fill="#a8d830"/><rect x="495.2" y="198.1" width="1" height="1" fill="#70c030"/><rect x="487.9" y="159.8" width="1" height="1" fill="#a8d830"/><rect x="460.8" y="208.6" width="1" height="1" fill="#a8d830"/><rect x="455.2" y="168.7" width="1" height="1" fill="#a8d830"/><rect x="504.9" y="161.1" width="1" height="1" fill="#70c030"/><rect x="535.2" y="211.7" width="1" height="1" fill="#70c030"/><rect x="453.9" y="171.3" width="1" height="1" fill="#b0e040"/><rect x="452.3" y="210.1" width="1" height="1" fill="#b0e040"/><rect x="494.0" y="208.3" width="1" height="1" fill="#70c030"/><rect x="492.3" y="191.7" width="1" height="1" fill="#70c030"/><rect x="596.3" y="161.8" width="1" height="1" fill="#a8d830"/><rect x="505.5" y="198.2" width="1" height="1" fill="#b0e040"/><rect x="509.2" y="180.3" width="1" height="1" fill="#a8d830"/><rect x="520.1" y="202.4" width="1" height="1" fill="#b0e040"/><rect x="459.0" y="167.5" width="1" height="1" fill="#70c030"/><rect x="474.2" y="212.4" width="1" height="1" fill="#70c030"/><rect x="506.5" y="178.3" width="1" height="1" fill="#70c030"/><rect x="527.7" y="179.6" width="1" height="1" fill="#70c030"/><rect x="545.8" y="211.8" width="1" height="1" fill="#70c030"/><rect x="572.7" y="177.7" width="1" height="1" fill="#b0e040"/><rect x="505.2" y="184.2" width="1" height="1" fill="#70c030"/><rect x="482.0" y="160.0" width="1" height="1" fill="#a8d830"/><rect x="449.4" y="203.1" width="1" height="1" fill="#b0e040"/><rect x="554.2" y="163.2" width="1" height="1" fill="#70c030"/><rect x="529.4" y="202.1" width="1" height="1" fill="#a8d830"/><rect x="513.8" y="204.8" width="1" height="1" fill="#b0e040"/><rect x="470.0" y="177.8" width="1" height="1" fill="#a8d830"/><rect x="507.9" y="193.2" width="1" height="1" fill="#a8d830"/><rect x="477.5" y="211.3" width="1" height="1" fill="#a8d830"/><rect x="477.0" y="206.1" width="1" height="1" fill="#a8d830"/><polygon fill="#f2fcd8" points="445.0,183.0 446.0,183.4 447.0,184.4 448.0,183.6 449.0,183.6 450.0,183.4 451.0,184.6 452.0,185.4 453.0,185.1 454.0,184.2 455.0,183.7 456.0,185.9 457.0,185.4 458.0,185.2 459.0,185.2 460.0,184.0 461.0,184.5 462.0,186.0 463.0,185.2 464.0,186.3 465.0,186.6 466.0,185.1 467.0,186.3 468.0,185.5 469.0,186.4 470.0,185.3 471.0,185.7 472.0,185.3 473.0,187.4 474.0,186.9 475.0,185.1 476.0,185.7 477.0,186.2 478.0,186.1 479.0,185.8 480.0,187.0 481.0,186.2 482.0,187.5 483.0,185.7 484.0,187.9 485.0,185.9 486.0,187.6 487.0,186.7 488.0,188.3 489.0,188.7 490.0,186.5 491.0,187.4 492.0,188.7 493.0,186.7 494.0,187.7 495.0,188.6 496.0,189.0 497.0,188.0 498.0,188.8 499.0,188.4 500.0,187.4 501.0,187.2 502.0,189.4 503.0,188.8 504.0,189.1 505.0,188.1 506.0,188.5 507.0,188.1 508.0,188.0 509.0,189.6 510.0,188.5 511.0,189.1 512.0,188.9 513.0,190.5 514.0,189.7 515.0,190.5 516.0,190.4 517.0,190.2 518.0,189.7 519.0,190.8 520.0,189.4 521.0,189.3 522.0,189.5 523.0,190.8 524.0,189.1 525.0,190.0 526.0,189.2 527.0,188.7 528.0,190.8 529.0,190.6 530.0,190.2 531.0,190.0 532.0,189.1 533.0,188.6 534.0,190.3 535.0,191.1 536.0,189.2 537.0,188.8 538.0,190.6 539.0,189.2 540.0,190.1 541.0,190.9 542.0,190.5 543.0,190.4 544.0,188.8 545.0,189.1 546.0,189.7 547.0,190.5 548.0,188.3 549.0,189.9 550.0,190.1 551.0,190.7 552.0,189.4 553.0,188.9 554.0,188.2 555.0,188.4 556.0,190.7 557.0,188.0 558.0,188.4 559.0,187.9 560.0,190.2 561.0,189.0 562.0,189.6 563.0,188.9 564.0,189.0 565.0,190.0 566.0,188.1 567.0,188.9 568.0,188.6 569.0,187.8 570.0,188.9 571.0,190.1 572.0,190.3 573.0,189.2 574.0,187.6 575.0,189.2 576.0,189.0 577.0,188.7 578.0,188.2 579.0,189.8 580.0,187.9 581.0,188.6 582.0,189.1 583.0,188.9 584.0,188.7 585.0,188.3 586.0,187.7 587.0,188.7 588.0,189.5 589.0,187.4 590.0,187.8 591.0,188.6 592.0,188.6 593.0,188.4 594.0,187.2 595.0,187.1 596.0,189.3 597.0,188.9 598.0,187.2 599.0,188.9 600.0,189.1 600.0,195.5 599.0,194.7 598.0,197.2 597.0,196.6 596.0,196.1 595.0,195.8 594.0,195.7 593.0,196.2 592.0,194.9 591.0,195.3 590.0,196.0 589.0,196.2 588.0,195.4 587.0,195.1 586.0,197.3 585.0,195.1 584.0,196.4 583.0,196.0 582.0,195.9 581.0,195.1 580.0,196.8 579.0,195.0 578.0,195.9 577.0,196.8 576.0,197.7 575.0,195.9 574.0,197.0 573.0,197.4 572.0,197.8 571.0,197.6 570.0,197.9 569.0,196.1 568.0,195.8 567.0,196.8 566.0,196.1 565.0,197.8 564.0,197.2 563.0,196.3 562.0,196.8 561.0,196.2 560.0,197.6 559.0,197.8 558.0,197.5 557.0,196.7 556.0,195.8 555.0,196.8 554.0,197.5 553.0,197.2 552.0,196.1 551.0,197.1 550.0,198.2 549.0,198.0 548.0,197.3 547.0,196.4 546.0,196.8 545.0,196.9 544.0,198.2 543.0,196.8 542.0,198.2 541.0,196.4 540.0,198.3 539.0,196.5 538.0,198.4 537.0,196.1 536.0,196.7 535.0,197.9 534.0,197.9 533.0,198.7 532.0,197.7 531.0,197.4 530.0,196.5 529.0,199.0 528.0,196.5 527.0,199.1 526.0,196.5 525.0,197.4 524.0,197.3 523.0,197.6 522.0,196.9 521.0,196.4 520.0,197.2 519.0,196.4 518.0,198.2 517.0,197.6 516.0,196.4 515.0,197.3 514.0,196.7 513.0,196.0 512.0,196.4 511.0,198.1 510.0,196.8 509.0,196.0 508.0,197.2 507.0,196.0 506.0,196.2 505.0,195.2 504.0,196.5 503.0,197.6 502.0,195.5 501.0,196.7 500.0,196.7 499.0,197.1 498.0,195.7 497.0,194.5 496.0,196.1 495.0,196.3 494.0,196.7 493.0,196.7 492.0,194.8 491.0,196.0 490.0,195.8 489.0,195.8 488.0,194.2 487.0,193.9 486.0,193.6 485.0,195.8 484.0,194.1 483.0,195.6 482.0,194.2 481.0,194.3 480.0,195.0 479.0,195.3 478.0,194.7 477.0,192.9 476.0,193.6 475.0,193.1 474.0,192.7 473.0,194.5 472.0,192.7 471.0,194.1 470.0,194.6 469.0,194.1 468.0,193.2 467.0,193.8 466.0,192.0 465.0,192.2 464.0,194.2 463.0,194.2 462.0,192.4 461.0,191.9 460.0,192.3 459.0,192.2 458.0,192.3 457.0,191.5 456.0,192.0 455.0,191.5 454.0,192.0 453.0,192.5 452.0,191.9 451.0,191.5 450.0,192.1 449.0,193.0 448.0,192.2 447.0,191.4 446.0,192.8 445.0,192.2"/></svg>
<div style="position:absolute;left:53px;top:257.93px;font-size:7px;line-height:7px;color:#cccccc;white-space:nowrap;">Rng</div>
<div style="position:absolute;left:67.5px;top:257px;width:25px;height:8px;background:#fff;"></div>
<div style="position:absolute;left:68.5px;top:257.93px;font-size:7px;line-height:7px;color:#000;white-space:nowrap;">100 mV</div>
<div style="position:absolute;left:95px;top:257.93px;font-size:7px;line-height:7px;color:#30b030;white-space:nowrap;">Pts 2.30G Avg -20.98 dBm</div>
<svg style="position:absolute;left:51px;top:263px" width="161" height="146"><line x1="18.5" y1="2.5" x2="18.5" y2="142.5" stroke="#3a3a3a" stroke-width="1"/><line x1="33.5" y1="2.5" x2="33.5" y2="142.5" stroke="#3a3a3a" stroke-width="1"/><line x1="49.5" y1="2.5" x2="49.5" y2="142.5" stroke="#3a3a3a" stroke-width="1"/><line x1="64.5" y1="2.5" x2="64.5" y2="142.5" stroke="#3a3a3a" stroke-width="1"/><line x1="80.5" y1="2.5" x2="80.5" y2="142.5" stroke="#3a3a3a" stroke-width="1"/><line x1="95.5" y1="2.5" x2="95.5" y2="142.5" stroke="#3a3a3a" stroke-width="1"/><line x1="111.5" y1="2.5" x2="111.5" y2="142.5" stroke="#3a3a3a" stroke-width="1"/><line x1="126.5" y1="2.5" x2="126.5" y2="142.5" stroke="#3a3a3a" stroke-width="1"/><line x1="142.5" y1="2.5" x2="142.5" y2="142.5" stroke="#3a3a3a" stroke-width="1"/><rect x="2.5" y="2.5" width="156.0" height="140.0" fill="none" stroke="#6a6a6a" stroke-width="1"/></svg>
<svg style="position:absolute;left:0;top:0" width="617" height="473"><line x1="54" y1="266.5" x2="209" y2="266.5" stroke="#2c2c2c" stroke-width="1"/><line x1="54" y1="267.5" x2="209" y2="267.5" stroke="#2c2c2c" stroke-width="1"/><line x1="54" y1="269.5" x2="209" y2="269.5" stroke="#2c2c2c" stroke-width="1"/><line x1="54" y1="271.5" x2="209" y2="271.5" stroke="#2c2c2c" stroke-width="1"/><line x1="54" y1="273.5" x2="209" y2="273.5" stroke="#2c2c2c" stroke-width="1"/><line x1="54" y1="276.5" x2="209" y2="276.5" stroke="#2c2c2c" stroke-width="1"/><line x1="54" y1="279.5" x2="209" y2="279.5" stroke="#2c2c2c" stroke-width="1"/><line x1="54" y1="284.5" x2="209" y2="284.5" stroke="#2c2c2c" stroke-width="1"/><line x1="54" y1="293.5" x2="209" y2="293.5" stroke="#4a4a4a" stroke-width="1"/><line x1="54" y1="294.5" x2="209" y2="294.5" stroke="#2c2c2c" stroke-width="1"/><line x1="54" y1="295.5" x2="209" y2="295.5" stroke="#2c2c2c" stroke-width="1"/><line x1="54" y1="297.5" x2="209" y2="297.5" stroke="#2c2c2c" stroke-width="1"/><line x1="54" y1="299.5" x2="209" y2="299.5" stroke="#2c2c2c" stroke-width="1"/><line x1="54" y1="301.5" x2="209" y2="301.5" stroke="#2c2c2c" stroke-width="1"/><line x1="54" y1="304.5" x2="209" y2="304.5" stroke="#2c2c2c" stroke-width="1"/><line x1="54" y1="307.5" x2="209" y2="307.5" stroke="#2c2c2c" stroke-width="1"/><line x1="54" y1="312.5" x2="209" y2="312.5" stroke="#2c2c2c" stroke-width="1"/><line x1="54" y1="321.5" x2="209" y2="321.5" stroke="#4a4a4a" stroke-width="1"/><line x1="54" y1="322.5" x2="209" y2="322.5" stroke="#2c2c2c" stroke-width="1"/><line x1="54" y1="323.5" x2="209" y2="323.5" stroke="#2c2c2c" stroke-width="1"/><line x1="54" y1="325.5" x2="209" y2="325.5" stroke="#2c2c2c" stroke-width="1"/><line x1="54" y1="327.5" x2="209" y2="327.5" stroke="#2c2c2c" stroke-width="1"/><line x1="54" y1="329.5" x2="209" y2="329.5" stroke="#2c2c2c" stroke-width="1"/><line x1="54" y1="332.5" x2="209" y2="332.5" stroke="#2c2c2c" stroke-width="1"/><line x1="54" y1="335.5" x2="209" y2="335.5" stroke="#2c2c2c" stroke-width="1"/><line x1="54" y1="340.5" x2="209" y2="340.5" stroke="#2c2c2c" stroke-width="1"/><line x1="54" y1="349.5" x2="209" y2="349.5" stroke="#4a4a4a" stroke-width="1"/><line x1="54" y1="350.5" x2="209" y2="350.5" stroke="#2c2c2c" stroke-width="1"/><line x1="54" y1="352.5" x2="209" y2="352.5" stroke="#2c2c2c" stroke-width="1"/><line x1="54" y1="353.5" x2="209" y2="353.5" stroke="#2c2c2c" stroke-width="1"/><line x1="54" y1="355.5" x2="209" y2="355.5" stroke="#2c2c2c" stroke-width="1"/><line x1="54" y1="357.5" x2="209" y2="357.5" stroke="#2c2c2c" stroke-width="1"/><line x1="54" y1="360.5" x2="209" y2="360.5" stroke="#2c2c2c" stroke-width="1"/><line x1="54" y1="363.5" x2="209" y2="363.5" stroke="#2c2c2c" stroke-width="1"/><line x1="54" y1="368.5" x2="209" y2="368.5" stroke="#2c2c2c" stroke-width="1"/><line x1="54" y1="377.5" x2="209" y2="377.5" stroke="#4a4a4a" stroke-width="1"/><line x1="54" y1="378.5" x2="209" y2="378.5" stroke="#2c2c2c" stroke-width="1"/><line x1="54" y1="380.5" x2="209" y2="380.5" stroke="#2c2c2c" stroke-width="1"/><line x1="54" y1="381.5" x2="209" y2="381.5" stroke="#2c2c2c" stroke-width="1"/><line x1="54" y1="383.5" x2="209" y2="383.5" stroke="#2c2c2c" stroke-width="1"/><line x1="54" y1="385.5" x2="209" y2="385.5" stroke="#2c2c2c" stroke-width="1"/><line x1="54" y1="388.5" x2="209" y2="388.5" stroke="#2c2c2c" stroke-width="1"/><line x1="54" y1="392.5" x2="209" y2="392.5" stroke="#2c2c2c" stroke-width="1"/><line x1="54" y1="397.5" x2="209" y2="397.5" stroke="#2c2c2c" stroke-width="1"/></svg>
<div style="position:absolute;left:61px;top:267.18px;font-size:10px;line-height:10px;color:#4c4c4c;white-space:nowrap;letter-spacing:0.1px;text-shadow:0 0 0.6px #4c4c4c;">Trial License</div>
<div style="position:absolute;right:566px;top:266.13px;font-size:7px;line-height:7px;color:#cccccc;white-space:nowrap;">100</div>
<div style="position:absolute;right:566px;top:274.13px;font-size:7px;line-height:7px;color:#cccccc;white-space:nowrap;">%</div>
<div style="position:absolute;right:566px;top:307.13px;font-size:7px;line-height:7px;color:#cccccc;white-space:nowrap;">LogMag</div>
<div style="position:absolute;right:566px;top:389.63px;font-size:7px;line-height:7px;color:#cccccc;white-space:nowrap;">1</div>
<div style="position:absolute;right:566px;top:398.13px;font-size:7px;line-height:7px;color:#cccccc;white-space:nowrap;">m%</div>
<div style="position:absolute;left:53px;top:408.13px;font-size:7px;line-height:7px;color:#cccccc;white-space:nowrap;">Start 0 dB</div>
<div style="position:absolute;right:407.5px;top:408.13px;font-size:7px;line-height:7px;color:#cccccc;white-space:nowrap;">Stop 20 dB</div>
<svg style="position:absolute;left:0;top:0" width="617" height="473"><path d="M53.50,276.70 C54.62,277.30 57.40,278.58 60.20,280.30 C63.00,282.02 66.92,284.60 70.30,287.00 C73.68,289.40 77.12,292.02 80.50,294.70 C83.88,297.38 87.52,300.13 90.60,303.10 C93.68,306.07 96.80,309.68 99.00,312.50 C101.20,315.32 102.38,317.75 103.80,320.00 C105.22,322.25 105.92,323.15 107.50,326.00 C109.08,328.85 111.05,332.70 113.30,337.10 C115.55,341.50 118.93,347.63 121.00,352.40 C123.07,357.17 124.12,360.62 125.70,365.70 C127.28,370.78 129.23,379.25 130.50,382.90 C131.77,386.55 132.03,385.70 133.30,387.60 C134.57,389.50 136.67,391.52 138.10,394.30 C139.53,397.08 141.08,402.52 141.90,404.30 C142.72,406.08 142.82,404.88 143.00,405.00 L209,405" fill="none" stroke="#58b44a" stroke-width="1.15" stroke-linejoin="round"/></svg>
<div style="position:absolute;left:249px;top:257.93px;font-size:7px;line-height:7px;color:#cccccc;white-space:nowrap;">Rng 100 mV</div>
<svg style="position:absolute;left:246px;top:263px" width="161" height="146"><line x1="18.5" y1="2.5" x2="18.5" y2="142.5" stroke="#3c3c3c" stroke-width="1"/><line x1="33.5" y1="2.5" x2="33.5" y2="142.5" stroke="#3c3c3c" stroke-width="1"/><line x1="49.5" y1="2.5" x2="49.5" y2="142.5" stroke="#3c3c3c" stroke-width="1"/><line x1="64.5" y1="2.5" x2="64.5" y2="142.5" stroke="#3c3c3c" stroke-width="1"/><line x1="80.5" y1="2.5" x2="80.5" y2="142.5" stroke="#3c3c3c" stroke-width="1"/><line x1="95.5" y1="2.5" x2="95.5" y2="142.5" stroke="#3c3c3c" stroke-width="1"/><line x1="111.5" y1="2.5" x2="111.5" y2="142.5" stroke="#3c3c3c" stroke-width="1"/><line x1="126.5" y1="2.5" x2="126.5" y2="142.5" stroke="#3c3c3c" stroke-width="1"/><line x1="142.5" y1="2.5" x2="142.5" y2="142.5" stroke="#3c3c3c" stroke-width="1"/><line x1="2.5" y1="16.5" x2="158.5" y2="16.5" stroke="#3c3c3c" stroke-width="1"/><line x1="2.5" y1="30.5" x2="158.5" y2="30.5" stroke="#3c3c3c" stroke-width="1"/><line x1="2.5" y1="44.5" x2="158.5" y2="44.5" stroke="#3c3c3c" stroke-width="1"/><line x1="2.5" y1="58.5" x2="158.5" y2="58.5" stroke="#3c3c3c" stroke-width="1"/><line x1="2.5" y1="72.5" x2="158.5" y2="72.5" stroke="#3c3c3c" stroke-width="1"/><line x1="2.5" y1="86.5" x2="158.5" y2="86.5" stroke="#3c3c3c" stroke-width="1"/><line x1="2.5" y1="100.5" x2="158.5" y2="100.5" stroke="#3c3c3c" stroke-width="1"/><line x1="2.5" y1="114.5" x2="158.5" y2="114.5" stroke="#3c3c3c" stroke-width="1"/><line x1="2.5" y1="128.5" x2="158.5" y2="128.5" stroke="#3c3c3c" stroke-width="1"/><rect x="2.5" y="2.5" width="156.0" height="140.0" fill="none" stroke="#6a6a6a" stroke-width="1"/></svg>
<div style="position:absolute;left:257px;top:267.18px;font-size:10px;line-height:10px;color:#4c4c4c;white-space:nowrap;letter-spacing:0.1px;text-shadow:0 0 0.6px #4c4c4c;">Trial License</div>
<div style="position:absolute;right:370px;top:266.83px;font-size:7px;line-height:7px;color:#cccccc;white-space:nowrap;">5</div>
<div style="position:absolute;right:370px;top:274.43px;font-size:7px;line-height:7px;color:#cccccc;white-space:nowrap;">%</div>
<div style="position:absolute;right:370px;top:307.63px;font-size:7px;line-height:7px;color:#cccccc;white-space:nowrap;">LinMag</div>
<div style="position:absolute;right:370px;top:339.43px;font-size:7px;line-height:7px;color:#cccccc;white-space:nowrap;">500</div>
<div style="position:absolute;right:370px;top:347.63px;font-size:7px;line-height:7px;color:#cccccc;white-space:nowrap;">m%</div>
<div style="position:absolute;right:370px;top:356.23px;font-size:7px;line-height:7px;color:#cccccc;white-space:nowrap;">/div</div>
<div style="position:absolute;right:370px;top:389.83px;font-size:7px;line-height:7px;color:#cccccc;white-space:nowrap;">0</div>
<div style="position:absolute;right:370px;top:398.33px;font-size:7px;line-height:7px;color:#cccccc;white-space:nowrap;">%</div>
<div style="position:absolute;left:249px;top:408.13px;font-size:7px;line-height:7px;color:#cccccc;white-space:nowrap;">Start 0&nbsp; sym</div>
<div style="position:absolute;right:212.5px;top:408.13px;font-size:7px;line-height:7px;color:#cccccc;white-space:nowrap;">Stop 41&nbsp; sym</div>
<svg style="position:absolute;left:0;top:0" width="617" height="473"><defs><linearGradient id="bg" x1="0" y1="0" x2="0" y2="1"><stop offset="0" stop-color="#d0e070"/><stop offset="0.3" stop-color="#a8d448"/><stop offset="0.6" stop-color="#84c43a"/><stop offset="1" stop-color="#8ac83a"/></linearGradient></defs><rect x="248.35" y="346.7" width="1.9" height="58.8" fill="url(#bg)"/><circle cx="249.3" cy="343.1" r="1.05" fill="#e8d8a8"/><circle cx="249.3" cy="340.3" r="1.05" fill="#c85030"/><line x1="249.3" y1="335.7" x2="249.3" y2="346.7125518596143" stroke="#6a2818" stroke-width="0.9"/><circle cx="249.3" cy="335.7" r="1.1" fill="#d87848"/><rect x="252.10" y="348.7" width="1.9" height="56.8" fill="url(#bg)"/><circle cx="253.1" cy="344.8" r="1.05" fill="#e0a050"/><rect x="255.86" y="346.2" width="1.9" height="59.3" fill="url(#bg)"/><circle cx="256.8" cy="342.9" r="1.05" fill="#e8d8a8"/><circle cx="256.8" cy="339.1" r="1.05" fill="#e0a050"/><rect x="259.61" y="354.2" width="1.9" height="51.3" fill="url(#bg)"/><circle cx="260.6" cy="351.3" r="1.05" fill="#d88038"/><circle cx="260.6" cy="347.2" r="1.05" fill="#e8d8a8"/><circle cx="260.6" cy="343.1" r="1.05" fill="#e8d8a8"/><line x1="260.6" y1="336.5" x2="260.6" y2="354.17504889728207" stroke="#6a2818" stroke-width="0.9"/><circle cx="260.6" cy="336.5" r="1.1" fill="#d87848"/><rect x="263.36" y="350.2" width="1.9" height="55.3" fill="url(#bg)"/><circle cx="264.3" cy="346.3" r="1.05" fill="#e8d8a8"/><circle cx="264.3" cy="342.2" r="1.05" fill="#d88038"/><circle cx="264.3" cy="339.5" r="1.05" fill="#c85030"/><line x1="264.3" y1="332.2" x2="264.3" y2="350.24708792180047" stroke="#6a2818" stroke-width="0.9"/><circle cx="264.3" cy="332.2" r="1.1" fill="#d87848"/><rect x="267.12" y="345.3" width="1.9" height="60.2" fill="url(#bg)"/><circle cx="268.1" cy="342.3" r="1.05" fill="#e0a050"/><circle cx="268.1" cy="338.4" r="1.05" fill="#e8d8a8"/><rect x="270.87" y="350.8" width="1.9" height="54.7" fill="url(#bg)"/><circle cx="271.8" cy="346.7" r="1.05" fill="#f0e8c8"/><line x1="271.8" y1="338.1" x2="271.8" y2="350.8137298703103" stroke="#6a2818" stroke-width="0.9"/><circle cx="271.8" cy="338.1" r="1.1" fill="#d87848"/><rect x="274.63" y="346.9" width="1.9" height="58.6" fill="url(#bg)"/><circle cx="275.6" cy="342.6" r="1.05" fill="#f0e8c8"/><circle cx="275.6" cy="338.4" r="1.05" fill="#c85030"/><circle cx="275.6" cy="334.2" r="1.05" fill="#c85030"/><rect x="278.38" y="352.6" width="1.9" height="52.9" fill="url(#bg)"/><circle cx="279.3" cy="348.2" r="1.05" fill="#e8d8a8"/><circle cx="279.3" cy="345.7" r="1.05" fill="#e0a050"/><circle cx="279.3" cy="342.2" r="1.05" fill="#f0e8c8"/><rect x="282.13" y="353.0" width="1.9" height="52.5" fill="url(#bg)"/><circle cx="283.1" cy="350.4" r="1.05" fill="#c85030"/><rect x="285.89" y="351.8" width="1.9" height="53.7" fill="url(#bg)"/><circle cx="286.8" cy="347.6" r="1.05" fill="#e0a050"/><circle cx="286.8" cy="343.7" r="1.05" fill="#f0e8c8"/><circle cx="286.8" cy="340.4" r="1.05" fill="#c85030"/><circle cx="286.8" cy="336.9" r="1.05" fill="#d88038"/><line x1="286.8" y1="332.4" x2="286.8" y2="351.7951224446271" stroke="#6a2818" stroke-width="0.9"/><circle cx="286.8" cy="332.4" r="1.1" fill="#d87848"/><rect x="289.64" y="353.9" width="1.9" height="51.6" fill="url(#bg)"/><circle cx="290.6" cy="351.0" r="1.05" fill="#d88038"/><rect x="293.39" y="348.3" width="1.9" height="57.2" fill="url(#bg)"/><circle cx="294.3" cy="345.0" r="1.05" fill="#d88038"/><circle cx="294.3" cy="341.9" r="1.05" fill="#d88038"/><circle cx="294.3" cy="338.3" r="1.05" fill="#d88038"/><circle cx="294.3" cy="335.3" r="1.05" fill="#e0a050"/><rect x="297.15" y="354.9" width="1.9" height="50.6" fill="url(#bg)"/><circle cx="298.1" cy="351.1" r="1.05" fill="#e0a050"/><line x1="298.1" y1="346.2" x2="298.1" y2="354.863977105071" stroke="#6a2818" stroke-width="0.9"/><circle cx="298.1" cy="346.2" r="1.1" fill="#d87848"/><rect x="300.90" y="350.0" width="1.9" height="55.5" fill="url(#bg)"/><circle cx="301.9" cy="346.8" r="1.05" fill="#c85030"/><circle cx="301.9" cy="343.2" r="1.05" fill="#e0a050"/><circle cx="301.9" cy="338.7" r="1.05" fill="#e8d8a8"/><rect x="304.65" y="354.0" width="1.9" height="51.5" fill="url(#bg)"/><circle cx="305.6" cy="349.8" r="1.05" fill="#f0e8c8"/><rect x="308.41" y="351.3" width="1.9" height="54.2" fill="url(#bg)"/><circle cx="309.4" cy="347.3" r="1.05" fill="#e0a050"/><circle cx="309.4" cy="343.0" r="1.05" fill="#e0a050"/><circle cx="309.4" cy="339.2" r="1.05" fill="#d88038"/><rect x="312.16" y="348.4" width="1.9" height="57.1" fill="url(#bg)"/><circle cx="313.1" cy="344.9" r="1.05" fill="#e0a050"/><circle cx="313.1" cy="341.7" r="1.05" fill="#c85030"/><circle cx="313.1" cy="337.8" r="1.05" fill="#d88038"/><line x1="313.1" y1="332.4" x2="313.1" y2="348.4150033995161" stroke="#6a2818" stroke-width="0.9"/><circle cx="313.1" cy="332.4" r="1.1" fill="#d87848"/><rect x="315.92" y="348.2" width="1.9" height="57.3" fill="url(#bg)"/><circle cx="316.9" cy="344.7" r="1.05" fill="#e0a050"/><circle cx="316.9" cy="340.6" r="1.05" fill="#d88038"/><circle cx="316.9" cy="337.8" r="1.05" fill="#e0a050"/><circle cx="316.9" cy="335.3" r="1.05" fill="#f0e8c8"/><rect x="319.67" y="349.0" width="1.9" height="56.5" fill="url(#bg)"/><circle cx="320.6" cy="344.6" r="1.05" fill="#c85030"/><circle cx="320.6" cy="342.0" r="1.05" fill="#d88038"/><circle cx="320.6" cy="338.0" r="1.05" fill="#d88038"/><rect x="323.42" y="350.5" width="1.9" height="55.0" fill="url(#bg)"/><circle cx="324.4" cy="347.9" r="1.05" fill="#e0a050"/><circle cx="324.4" cy="344.2" r="1.05" fill="#e8d8a8"/><circle cx="324.4" cy="340.5" r="1.05" fill="#d88038"/><rect x="327.18" y="354.9" width="1.9" height="50.6" fill="url(#bg)"/><circle cx="328.1" cy="350.4" r="1.05" fill="#f0e8c8"/><circle cx="328.1" cy="346.5" r="1.05" fill="#e8d8a8"/><circle cx="328.1" cy="342.3" r="1.05" fill="#d88038"/><rect x="330.93" y="347.8" width="1.9" height="57.7" fill="url(#bg)"/><circle cx="331.9" cy="344.2" r="1.05" fill="#e0a050"/><circle cx="331.9" cy="340.4" r="1.05" fill="#e0a050"/><circle cx="331.9" cy="336.5" r="1.05" fill="#e0a050"/><line x1="331.9" y1="330.4" x2="331.9" y2="347.7587202860215" stroke="#6a2818" stroke-width="0.9"/><circle cx="331.9" cy="330.4" r="1.1" fill="#d87848"/><rect x="334.68" y="353.9" width="1.9" height="51.6" fill="url(#bg)"/><circle cx="335.6" cy="349.7" r="1.05" fill="#e8d8a8"/><circle cx="335.6" cy="346.8" r="1.05" fill="#e8d8a8"/><circle cx="335.6" cy="342.4" r="1.05" fill="#c85030"/><line x1="335.6" y1="338.9" x2="335.6" y2="353.92839011571573" stroke="#6a2818" stroke-width="0.9"/><circle cx="335.6" cy="338.9" r="1.1" fill="#d87848"/><rect x="338.44" y="353.2" width="1.9" height="52.3" fill="url(#bg)"/><circle cx="339.4" cy="349.2" r="1.05" fill="#e8d8a8"/><circle cx="339.4" cy="346.3" r="1.05" fill="#c85030"/><circle cx="339.4" cy="342.6" r="1.05" fill="#e8d8a8"/><rect x="342.19" y="354.2" width="1.9" height="51.3" fill="url(#bg)"/><circle cx="343.1" cy="351.1" r="1.05" fill="#e8d8a8"/><circle cx="343.1" cy="347.3" r="1.05" fill="#f0e8c8"/><rect x="345.95" y="353.0" width="1.9" height="52.5" fill="url(#bg)"/><circle cx="346.9" cy="350.4" r="1.05" fill="#f0e8c8"/><circle cx="346.9" cy="346.3" r="1.05" fill="#e8d8a8"/><rect x="349.70" y="348.3" width="1.9" height="57.2" fill="url(#bg)"/><circle cx="350.6" cy="343.9" r="1.05" fill="#f0e8c8"/><circle cx="350.6" cy="340.9" r="1.05" fill="#f0e8c8"/><circle cx="350.6" cy="336.6" r="1.05" fill="#e8d8a8"/><circle cx="350.6" cy="332.3" r="1.05" fill="#c85030"/><rect x="353.45" y="348.1" width="1.9" height="57.4" fill="url(#bg)"/><circle cx="354.4" cy="344.4" r="1.05" fill="#d88038"/><circle cx="354.4" cy="341.6" r="1.05" fill="#e8d8a8"/><circle cx="354.4" cy="338.8" r="1.05" fill="#e0a050"/><circle cx="354.4" cy="335.2" r="1.05" fill="#e8d8a8"/><rect x="357.21" y="348.6" width="1.9" height="56.9" fill="url(#bg)"/><circle cx="358.2" cy="345.0" r="1.05" fill="#c85030"/><circle cx="358.2" cy="340.8" r="1.05" fill="#e0a050"/><circle cx="358.2" cy="337.0" r="1.05" fill="#c85030"/><rect x="360.96" y="347.3" width="1.9" height="58.2" fill="url(#bg)"/><circle cx="361.9" cy="343.2" r="1.05" fill="#f0e8c8"/><circle cx="361.9" cy="339.1" r="1.05" fill="#d88038"/><circle cx="361.9" cy="335.3" r="1.05" fill="#c85030"/><rect x="364.71" y="349.5" width="1.9" height="56.0" fill="url(#bg)"/><circle cx="365.7" cy="346.3" r="1.05" fill="#c85030"/><circle cx="365.7" cy="341.9" r="1.05" fill="#e0a050"/><circle cx="365.7" cy="338.9" r="1.05" fill="#c85030"/><rect x="368.47" y="351.6" width="1.9" height="53.9" fill="url(#bg)"/><circle cx="369.4" cy="348.8" r="1.05" fill="#e0a050"/><circle cx="369.4" cy="345.5" r="1.05" fill="#e8d8a8"/><circle cx="369.4" cy="341.1" r="1.05" fill="#c85030"/><line x1="369.4" y1="337.7" x2="369.4" y2="351.5536108470855" stroke="#6a2818" stroke-width="0.9"/><circle cx="369.4" cy="337.7" r="1.1" fill="#d87848"/><rect x="372.22" y="350.0" width="1.9" height="55.5" fill="url(#bg)"/><circle cx="373.2" cy="347.0" r="1.05" fill="#c85030"/><circle cx="373.2" cy="343.8" r="1.05" fill="#e0a050"/><rect x="375.97" y="353.7" width="1.9" height="51.8" fill="url(#bg)"/><circle cx="376.9" cy="350.2" r="1.05" fill="#d88038"/><circle cx="376.9" cy="346.1" r="1.05" fill="#e0a050"/><rect x="379.73" y="353.6" width="1.9" height="51.9" fill="url(#bg)"/><circle cx="380.7" cy="349.8" r="1.05" fill="#d88038"/><circle cx="380.7" cy="345.5" r="1.05" fill="#f0e8c8"/><rect x="383.48" y="348.2" width="1.9" height="57.3" fill="url(#bg)"/><circle cx="384.4" cy="345.5" r="1.05" fill="#e8d8a8"/><line x1="384.4" y1="338.0" x2="384.4" y2="348.23831757827236" stroke="#6a2818" stroke-width="0.9"/><circle cx="384.4" cy="338.0" r="1.1" fill="#d87848"/><rect x="387.24" y="349.0" width="1.9" height="56.5" fill="url(#bg)"/><circle cx="388.2" cy="346.4" r="1.05" fill="#c85030"/><circle cx="388.2" cy="343.1" r="1.05" fill="#f0e8c8"/><circle cx="388.2" cy="338.8" r="1.05" fill="#e0a050"/><line x1="388.2" y1="335.6" x2="388.2" y2="349.0185374523857" stroke="#6a2818" stroke-width="0.9"/><circle cx="388.2" cy="335.6" r="1.1" fill="#d87848"/><rect x="390.99" y="352.1" width="1.9" height="53.4" fill="url(#bg)"/><circle cx="391.9" cy="349.1" r="1.05" fill="#e0a050"/><circle cx="391.9" cy="346.0" r="1.05" fill="#f0e8c8"/><rect x="394.74" y="348.0" width="1.9" height="57.5" fill="url(#bg)"/><circle cx="395.7" cy="345.1" r="1.05" fill="#c85030"/><circle cx="395.7" cy="341.0" r="1.05" fill="#f0e8c8"/><circle cx="395.7" cy="336.7" r="1.05" fill="#d88038"/><circle cx="395.7" cy="332.3" r="1.05" fill="#e0a050"/><rect x="398.50" y="347.8" width="1.9" height="57.7" fill="url(#bg)"/><circle cx="399.4" cy="345.3" r="1.05" fill="#e0a050"/><circle cx="399.4" cy="342.5" r="1.05" fill="#c85030"/><circle cx="399.4" cy="338.8" r="1.05" fill="#f0e8c8"/><line x1="399.4" y1="335.4" x2="399.4" y2="347.8256594455565" stroke="#6a2818" stroke-width="0.9"/><circle cx="399.4" cy="335.4" r="1.1" fill="#d87848"/><rect x="402.25" y="352.8" width="1.9" height="52.7" fill="url(#bg)"/><circle cx="403.2" cy="350.2" r="1.05" fill="#f0e8c8"/><circle cx="403.2" cy="347.4" r="1.05" fill="#e0a050"/><circle cx="403.2" cy="342.9" r="1.05" fill="#d88038"/><line x1="249.3" y1="323" x2="249.3" y2="350" stroke="#a04040" stroke-width="1"/><line x1="403.2" y1="328" x2="403.2" y2="350" stroke="#a04040" stroke-width="1"/><polyline fill="none" stroke="#f4f8e8" stroke-width="1.6" points="249.0,382.4 251.0,382.3 253.0,383.5 255.0,383.1 257.0,383.1 259.0,382.8 261.0,382.1 263.0,382.2 265.0,382.2 267.0,382.6 269.0,383.1 271.0,383.5 273.0,383.3 275.0,382.6 277.0,382.0 279.0,382.3 281.0,382.3 283.0,382.5 285.0,383.4 287.0,383.0 289.0,382.8 291.0,382.7 293.0,382.2 295.0,382.2 297.0,382.5 299.0,382.5 301.0,383.6 303.0,383.0 305.0,382.7 307.0,382.9 309.0,382.5 311.0,382.1 313.0,382.0 315.0,382.7 317.0,383.4 319.0,383.5 321.0,383.0 323.0,382.8 325.0,382.1 327.0,382.3 329.0,382.8 331.0,382.7 333.0,383.7 335.0,383.6 337.0,383.3 339.0,382.1 341.0,381.7 343.0,382.3 345.0,382.2 347.0,382.9 349.0,383.8 351.0,383.0 353.0,382.5 355.0,382.5 357.0,382.4 359.0,382.0 361.0,382.5 363.0,382.8 365.0,383.4 367.0,383.1 369.0,382.6 371.0,382.2 373.0,382.4 375.0,382.4 377.0,382.5 379.0,383.1 381.0,383.4 383.0,383.1 385.0,382.4 387.0,382.4 389.0,382.3 391.0,382.5 393.0,383.1 395.0,383.4 397.0,383.2 399.0,383.1 401.0,383.0 403.0,382.3"/></svg>
<div style="position:absolute;left:416.5px;top:271.33px;font-size:7px;line-height:7px;color:#b02cc4;white-space:nowrap;text-shadow:0 0 0.5px #b02cc4;">EVM</div>
<div style="position:absolute;left:512px;top:271.33px;font-size:7px;line-height:7px;color:#b02cc4;white-space:nowrap;">=</div>
<div style="position:absolute;left:518.5px;top:271.33px;font-size:7px;line-height:7px;color:#b02cc4;white-space:nowrap;">791.47</div>
<div style="position:absolute;right:39px;top:271.33px;font-size:7px;line-height:7px;color:#b02cc4;white-space:nowrap;">m%rms</div>
<div style="position:absolute;left:584px;top:271.33px;font-size:7px;line-height:7px;color:#b02cc4;white-space:nowrap;">at</div>
<div style="position:absolute;left:416.5px;top:279.93px;font-size:7px;line-height:7px;color:#b02cc4;white-space:nowrap;text-shadow:0 0 0.5px #b02cc4;">EVM Pk</div>
<div style="position:absolute;left:512px;top:279.93px;font-size:7px;line-height:7px;color:#b02cc4;white-space:nowrap;">=</div>
<div style="position:absolute;left:518.5px;top:279.93px;font-size:7px;line-height:7px;color:#b02cc4;white-space:nowrap;">2.6774</div>
<div style="position:absolute;right:39px;top:279.93px;font-size:7px;line-height:7px;color:#b02cc4;white-space:nowrap;">%</div>
<div style="position:absolute;left:584px;top:279.93px;font-size:7px;line-height:7px;color:#b02cc4;white-space:nowrap;">at</div>
<div style="position:absolute;left:416.5px;top:288.83px;font-size:7px;line-height:7px;color:#b02cc4;white-space:nowrap;text-shadow:0 0 0.5px #b02cc4;">Data EVM</div>
<div style="position:absolute;left:512px;top:288.83px;font-size:7px;line-height:7px;color:#b02cc4;white-space:nowrap;">=</div>
<div style="position:absolute;left:518.5px;top:288.83px;font-size:7px;line-height:7px;color:#b02cc4;white-space:nowrap;">797.50</div>
<div style="position:absolute;right:39px;top:288.83px;font-size:7px;line-height:7px;color:#b02cc4;white-space:nowrap;">m%rms</div>
<div style="position:absolute;left:416.5px;top:297.63px;font-size:7px;line-height:7px;color:#b02cc4;white-space:nowrap;text-shadow:0 0 0.5px #b02cc4;">&nbsp;- 3GPP-defined QPSK EVM</div>
<div style="position:absolute;left:512px;top:297.63px;font-size:7px;line-height:7px;color:#b02cc4;white-space:nowrap;">=</div>
<div style="position:absolute;left:518.5px;top:297.63px;font-size:7px;line-height:7px;color:#b02cc4;white-space:nowrap;">---</div>
<div style="position:absolute;left:416.5px;top:305.93px;font-size:7px;line-height:7px;color:#b02cc4;white-space:nowrap;text-shadow:0 0 0.5px #b02cc4;">&nbsp;- 3GPP-defined 16QAM EVM</div>
<div style="position:absolute;left:512px;top:305.93px;font-size:7px;line-height:7px;color:#b02cc4;white-space:nowrap;">=</div>
<div style="position:absolute;left:518.5px;top:305.93px;font-size:7px;line-height:7px;color:#b02cc4;white-space:nowrap;">---</div>
<div style="position:absolute;left:416.5px;top:314.43px;font-size:7px;line-height:7px;color:#b02cc4;white-space:nowrap;text-shadow:0 0 0.5px #b02cc4;">&nbsp;- 3GPP-defined 64QAM EVM</div>
<div style="position:absolute;left:512px;top:314.43px;font-size:7px;line-height:7px;color:#b02cc4;white-space:nowrap;">=</div>
<div style="position:absolute;left:518.5px;top:314.43px;font-size:7px;line-height:7px;color:#b02cc4;white-space:nowrap;">799.17</div>
<div style="position:absolute;right:39px;top:314.43px;font-size:7px;line-height:7px;color:#b02cc4;white-space:nowrap;">m%rms</div>
<div style="position:absolute;left:416.5px;top:322.93px;font-size:7px;line-height:7px;color:#b02cc4;white-space:nowrap;text-shadow:0 0 0.5px #b02cc4;">RS EVM</div>
<div style="position:absolute;left:512px;top:322.93px;font-size:7px;line-height:7px;color:#b02cc4;white-space:nowrap;">=</div>
<div style="position:absolute;left:518.5px;top:322.93px;font-size:7px;line-height:7px;color:#b02cc4;white-space:nowrap;">771.04</div>
<div style="position:absolute;right:39px;top:322.93px;font-size:7px;line-height:7px;color:#b02cc4;white-space:nowrap;">m%rms</div>
<div style="position:absolute;left:416.5px;top:331.43px;font-size:7px;line-height:7px;color:#b02cc4;white-space:nowrap;text-shadow:0 0 0.5px #b02cc4;">Channel Power</div>
<div style="position:absolute;left:512px;top:331.43px;font-size:7px;line-height:7px;color:#b02cc4;white-space:nowrap;">=</div>
<div style="position:absolute;left:518.5px;top:331.43px;font-size:7px;line-height:7px;color:#b02cc4;white-space:nowrap;">-20.994</div>
<div style="position:absolute;right:39px;top:331.43px;font-size:7px;line-height:7px;color:#b02cc4;white-space:nowrap;">dBm</div>
<div style="position:absolute;left:416.5px;top:340.13px;font-size:7px;line-height:7px;color:#b02cc4;white-space:nowrap;text-shadow:0 0 0.5px #b02cc4;">RS Tx. Power (Avg)</div>
<div style="position:absolute;left:512px;top:340.13px;font-size:7px;line-height:7px;color:#b02cc4;white-space:nowrap;">=</div>
<div style="position:absolute;left:518.5px;top:340.13px;font-size:7px;line-height:7px;color:#b02cc4;white-space:nowrap;">-51.676</div>
<div style="position:absolute;right:39px;top:340.13px;font-size:7px;line-height:7px;color:#b02cc4;white-space:nowrap;">dBm</div>
<div style="position:absolute;left:416.5px;top:348.63px;font-size:7px;line-height:7px;color:#b02cc4;white-space:nowrap;text-shadow:0 0 0.5px #b02cc4;">OFDM Sym. Tx. Power</div>
<div style="position:absolute;left:512px;top:348.63px;font-size:7px;line-height:7px;color:#b02cc4;white-space:nowrap;">=</div>
<div style="position:absolute;left:518.5px;top:348.63px;font-size:7px;line-height:7px;color:#b02cc4;white-space:nowrap;">-20.932</div>
<div style="position:absolute;right:39px;top:348.63px;font-size:7px;line-height:7px;color:#b02cc4;white-space:nowrap;">dBm</div>
<div style="position:absolute;left:416.5px;top:357.23px;font-size:7px;line-height:7px;color:#b02cc4;white-space:nowrap;text-shadow:0 0 0.5px #b02cc4;">RS Rx. Power (Avg)</div>
<div style="position:absolute;left:512px;top:357.23px;font-size:7px;line-height:7px;color:#b02cc4;white-space:nowrap;">=</div>
<div style="position:absolute;left:518.5px;top:357.23px;font-size:7px;line-height:7px;color:#b02cc4;white-space:nowrap;">-51.676</div>
<div style="position:absolute;right:39px;top:357.23px;font-size:7px;line-height:7px;color:#b02cc4;white-space:nowrap;">dBm</div>
<div style="position:absolute;left:416.5px;top:365.83px;font-size:7px;line-height:7px;color:#b02cc4;white-space:nowrap;text-shadow:0 0 0.5px #b02cc4;">RSSI</div>
<div style="position:absolute;left:512px;top:365.83px;font-size:7px;line-height:7px;color:#b02cc4;white-space:nowrap;">=</div>
<div style="position:absolute;left:518.5px;top:365.83px;font-size:7px;line-height:7px;color:#b02cc4;white-space:nowrap;">-20.91</div>
<div style="position:absolute;right:39px;top:365.83px;font-size:7px;line-height:7px;color:#b02cc4;white-space:nowrap;">dBm</div>
<div style="position:absolute;left:416.5px;top:374.43px;font-size:7px;line-height:7px;color:#b02cc4;white-space:nowrap;text-shadow:0 0 0.5px #b02cc4;">RS Rx. Quality</div>
<div style="position:absolute;left:512px;top:374.43px;font-size:7px;line-height:7px;color:#b02cc4;white-space:nowrap;">=</div>
<div style="position:absolute;left:518.5px;top:374.43px;font-size:7px;line-height:7px;color:#b02cc4;white-space:nowrap;">-10.785</div>
<div style="position:absolute;right:39px;top:374.43px;font-size:7px;line-height:7px;color:#b02cc4;white-space:nowrap;">dB</div>
<div style="position:absolute;left:416.5px;top:388.63px;font-size:7px;line-height:7px;color:#b02cc4;white-space:nowrap;text-shadow:0 0 0.5px #b02cc4;">Freq Err</div>
<div style="position:absolute;left:512px;top:388.63px;font-size:7px;line-height:7px;color:#b02cc4;white-space:nowrap;">=</div>
<div style="position:absolute;left:518.5px;top:388.63px;font-size:7px;line-height:7px;color:#b02cc4;white-space:nowrap;">66.264</div>
<div style="position:absolute;right:39px;top:388.63px;font-size:7px;line-height:7px;color:#b02cc4;white-space:nowrap;">Hz</div>
<div style="position:absolute;left:416.5px;top:397.13px;font-size:7px;line-height:7px;color:#b02cc4;white-space:nowrap;text-shadow:0 0 0.5px #b02cc4;">SyncCorr</div>
<div style="position:absolute;left:512px;top:397.13px;font-size:7px;line-height:7px;color:#b02cc4;white-space:nowrap;">=</div>
<div style="position:absolute;left:518.5px;top:397.13px;font-size:7px;line-height:7px;color:#b02cc4;white-space:nowrap;">99.972</div>
<div style="position:absolute;right:39px;top:397.13px;font-size:7px;line-height:7px;color:#b02cc4;white-space:nowrap;">%</div>
<div style="position:absolute;left:584px;top:397.13px;font-size:7px;line-height:7px;color:#b02cc4;white-space:nowrap;">at</div>
<div style="position:absolute;left:416.5px;top:405.63px;font-size:7px;line-height:7px;color:#b02cc4;white-space:nowrap;text-shadow:0 0 0.5px #b02cc4;">Common Tracking Error</div>
<div style="position:absolute;left:512px;top:405.63px;font-size:7px;line-height:7px;color:#b02cc4;white-space:nowrap;">=</div>
<div style="position:absolute;left:518.5px;top:405.63px;font-size:7px;line-height:7px;color:#b02cc4;white-space:nowrap;">41.649</div>
<div style="position:absolute;right:39px;top:405.63px;font-size:7px;line-height:7px;color:#b02cc4;white-space:nowrap;">m%rms</div>
<div style="position:absolute;left:412px;top:383.5px;width:182px;height:1.5px;background:#8a1a9a;"></div>
<div style="position:absolute;left:566px;top:257.13px;font-size:7px;line-height:7px;color:#30c030;white-space:nowrap;">Mrx1</div>
<div style="position:absolute;left:594.5px;top:254px;width:9.5px;height:161px;background:#f4f4fa;border-left:1px solid #e8e8f0;"></div>
<div style="position:absolute;left:594.5px;top:255px;width:9.5px;height:15px;background:linear-gradient(90deg,#d8e4fa,#b8ccf0);border-radius:1px;"></div>
<svg style="position:absolute;left:596px;top:259px" width="7" height="5"><path d="M0.5 4 L3.5 1 L6.5 4" stroke="#4a6ab8" stroke-width="1.2" fill="none"/></svg>
<div style="position:absolute;left:595px;top:271px;width:9px;height:18px;background:linear-gradient(90deg,#e4ecfc,#c4d4f4);border:1px solid #b8c8ec;border-radius:1px;"></div>
<div style="position:absolute;left:594.5px;top:402px;width:9.5px;height:13px;background:linear-gradient(90deg,#d8e4fa,#b8ccf0);border-radius:1px;"></div>
<svg style="position:absolute;left:596px;top:406px" width="7" height="5"><path d="M0.5 1 L3.5 4 L6.5 1" stroke="#4a6ab8" stroke-width="1.2" fill="none"/></svg>
<div style="position:absolute;left:412px;top:415px;width:192px;height:11px;background:#fafafe;"></div>
<div style="position:absolute;left:413px;top:416px;width:15px;height:10px;background:linear-gradient(#d8e4fa,#b8ccf0);border-radius:1px;"></div>
<svg style="position:absolute;left:417px;top:418px" width="5" height="7"><path d="M4 0.5 L1 3.5 L4 6.5" stroke="#4a6ab8" stroke-width="1.2" fill="none"/></svg>
<div style="position:absolute;left:582px;top:416px;width:12px;height:10px;background:linear-gradient(#d8e4fa,#b8ccf0);border-radius:1px;"></div>
<svg style="position:absolute;left:586px;top:418px" width="5" height="7"><path d="M1 0.5 L4 3.5 L1 6.5" stroke="#4a6ab8" stroke-width="1.2" fill="none"/></svg>
<div style="position:absolute;left:29.5px;top:457.01px;font-size:14.5px;line-height:14.5px;color:#222;white-space:nowrap;">6</div>
<div style="position:absolute;left:44px;top:457.25px;font-size:14px;line-height:14px;color:#222;white-space:nowrap;letter-spacing:0px;">.3GPP EVM</div>
<svg style="position:absolute;left:0;top:0" width="617" height="473"><g fill="none" stroke="#151515" stroke-width="1.15">
<path d="M13.6 456.8 V471 M13.6 457.3 H25.4 V471 M13.6 470.2 H25.4"/>
<path d="M16.2 459.6 H22.4 L15 465 M17.6 461.4 L24.3 465 M16.6 465.8 L20.2 466.6 M16 468.2 H22.2"/>
<path d="M120.6 458.2 L121.8 459.2 M120.4 461.6 L121.8 462.6 M120.4 469.2 L122.2 465.6"/>
<path d="M123 458 V465.8 M123 458 H128 V465.8 M125.5 459.5 V464.5 M124.6 466.2 L122 469.6 M126.8 466.4 L129.4 469"/>
<path d="M130.2 458.6 V466.6 M132.8 457.2 V470 L131.2 469.4"/>
<path d="M138.6 457.4 H146.4 V462 H138.6 Z M138.6 459.7 H146.4 M135.2 463.2 H150 M138.6 464.3 H146.4 V467.2 H138.6 Z M142.5 464.3 V469.8 M138.6 465.8 H146.4 M139 468.3 H146 M136 469.9 H149.8"/>
</g></svg>
</body></html>
